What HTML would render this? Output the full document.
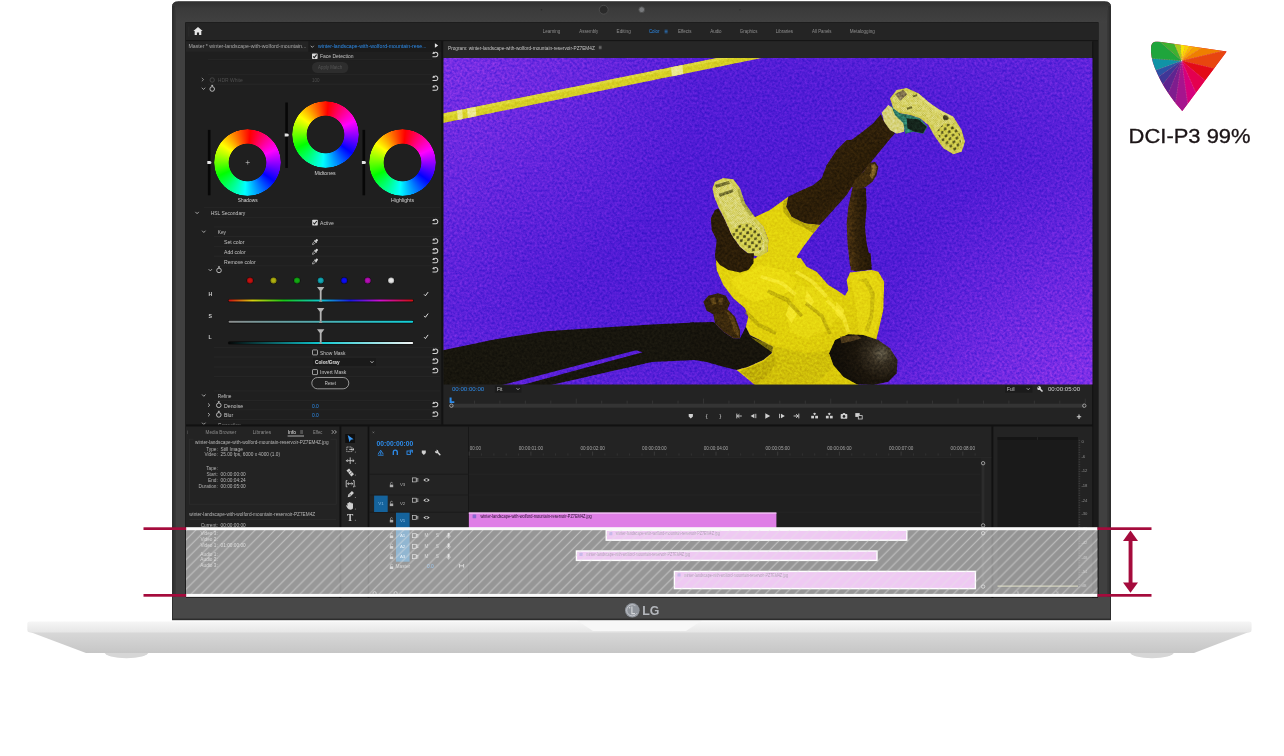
<!DOCTYPE html>
<html lang="en">
<head>
<meta charset="utf-8">
<title>DCI-P3 99% display</title>
<style>
html,body{margin:0;padding:0;background:#fff;}
#stage{position:relative;width:1284px;height:756px;overflow:hidden;background:#fff;font-family:"Liberation Sans",sans-serif;}
#stage svg{position:absolute;left:0;top:0;display:block;will-change:transform;}
svg text{font-family:"Liberation Sans",sans-serif;}
.wheel{position:absolute;width:67px;height:67px;border-radius:50%;
  background:conic-gradient(from 5deg,#ff0000 0deg,#ff0080 30deg,#ff00ff 60deg,#8000ff 90deg,#0000ff 120deg,#0080ff 150deg,#00ffff 180deg,#00ff80 210deg,#00ff00 240deg,#80ff00 270deg,#ffff00 300deg,#ff8000 330deg,#ff0000 360deg);
  -webkit-mask:radial-gradient(circle,transparent 18.5px,#000 19.2px,#000 32.9px,transparent 33.6px);
  mask:radial-gradient(circle,transparent 18.5px,#000 19.2px,#000 32.9px,transparent 33.6px);}
</style>
</head>
<body>
<div id="stage">
<svg width="1284" height="756" viewBox="0 0 1284 756">
<defs>
  <linearGradient id="gBezelL" x1="0" x2="1" y1="0" y2="0">
    <stop offset="0" stop-color="#2e2e2e"/><stop offset="0.18" stop-color="#3e3e3e"/><stop offset="1" stop-color="#434343"/>
  </linearGradient>
  <linearGradient id="gBezelT" x1="0" x2="0" y1="0" y2="1">
    <stop offset="0" stop-color="#303030"/><stop offset="0.3" stop-color="#3a3a3a"/><stop offset="1" stop-color="#414141"/>
  </linearGradient>
  <linearGradient id="gBaseTop" x1="0" x2="0" y1="0" y2="1">
    <stop offset="0" stop-color="#f6f6f6"/><stop offset="1" stop-color="#e6e6e6"/>
  </linearGradient>
  <linearGradient id="gBaseLow" x1="0" x2="0" y1="0" y2="1">
    <stop offset="0" stop-color="#d9d9d9"/><stop offset="1" stop-color="#c6c6c6"/>
  </linearGradient>
  <pattern id="hatch" width="9.9" height="9.9" patternUnits="userSpaceOnUse" x="187.9" y="528">
    <path d="M-2 11.9 L11.9 -2 M-2 2 L2 -2 M7.9 11.9 L11.9 7.9" stroke="#e4e4e4" stroke-opacity="0.55" stroke-width="1.1" fill="none"/>
  </pattern>
  <clipPath id="clipScreen"><rect x="186" y="23" width="912" height="575"/></clipPath>
  <clipPath id="clipPhoto"><rect x="443.5" y="58" width="649" height="326.4"/></clipPath>

  <radialGradient id="gPurpA" gradientUnits="userSpaceOnUse" cx="0" cy="0" r="1" gradientTransform="translate(770 215) scale(470 250)">
    <stop offset="0" stop-color="#4e1ad4" stop-opacity="1"/><stop offset="0.55" stop-color="#501bd5" stop-opacity="0.9"/><stop offset="1" stop-color="#521cd6" stop-opacity="0"/>
  </radialGradient>
  <radialGradient id="gPurpB" gradientUnits="userSpaceOnUse" cx="443" cy="58" r="260">
    <stop offset="0" stop-color="#7a30e6" stop-opacity="0.9"/><stop offset="1" stop-color="#7a30e6" stop-opacity="0"/>
  </radialGradient>
  <radialGradient id="gPurpC" gradientUnits="userSpaceOnUse" cx="1093" cy="385" r="230">
    <stop offset="0" stop-color="#8632ea" stop-opacity="0.8"/><stop offset="1" stop-color="#8632ea" stop-opacity="0"/>
  </radialGradient>
  <linearGradient id="gSkinA" x1="0" y1="0" x2="1" y2="1">
    <stop offset="0" stop-color="#3a280b"/><stop offset="0.55" stop-color="#2a1c07"/><stop offset="1" stop-color="#55390f"/>
  </linearGradient>
  <linearGradient id="gSkinB" x1="0" y1="0" x2="1" y2="0">
    <stop offset="0" stop-color="#4a3210"/><stop offset="0.45" stop-color="#2f2009"/><stop offset="1" stop-color="#241806"/>
  </linearGradient>
  <linearGradient id="gShirt" x1="0" y1="0" x2="1" y2="1">
    <stop offset="0" stop-color="#e3d30c"/><stop offset="0.5" stop-color="#e0cf0a"/><stop offset="1" stop-color="#d6c40a"/>
  </linearGradient>
  <radialGradient id="gHead" gradientUnits="userSpaceOnUse" cx="1150" cy="560" r="260">
    <stop offset="0" stop-color="#5e5746"/><stop offset="0.25" stop-color="#352d20"/><stop offset="0.6" stop-color="#1b150c"/><stop offset="1" stop-color="#120e08"/>
  </radialGradient>
  <filter id="fGrain" x="0" y="0" width="100%" height="100%" filterUnits="objectBoundingBox" color-interpolation-filters="sRGB">
    <feTurbulence type="fractalNoise" baseFrequency="0.4" numOctaves="2" seed="7" result="n"/>
    <feColorMatrix in="n" type="matrix" values="0.48 0 0 0 0.260  0.48 0 0 0 0.260  0.48 0 0 0 0.260  0 0 0 0 1"/>
  </filter>
  <pattern id="pSpike" width="30" height="30" patternUnits="userSpaceOnUse" patternTransform="rotate(38)">
    <path d="M15 3 L25 15 L15 27 L5 15 Z" fill="#3d3b12"/>
  </pattern>
  <pattern id="pMesh" width="9" height="9" patternUnits="userSpaceOnUse" patternTransform="rotate(38)">
    <rect x="0" y="0" width="4" height="4" fill="#8a8830" opacity="0.45"/>
  </pattern>

  <clipPath id="clipLum"><rect x="186" y="41" width="255" height="383.5"/></clipPath>
  <clipPath id="clipGamut"><path d="M150 97 L728 180 L355 680 C280 600 185 470 125 320 C100 255 88 195 93 140 C96 108 120 94 150 97 Z"/></clipPath>
  <linearGradient id="gHue" x1="0" x2="1" y1="0" y2="0">
    <stop offset="0" stop-color="#d01010"/><stop offset="0.13" stop-color="#d8d010"/><stop offset="0.3" stop-color="#18c818"/>
    <stop offset="0.5" stop-color="#10c8d0"/><stop offset="0.66" stop-color="#1818e0"/><stop offset="0.82" stop-color="#d010d0"/><stop offset="1" stop-color="#d01010"/>
  </linearGradient>
  <linearGradient id="gSat" x1="0" x2="1" y1="0" y2="0">
    <stop offset="0" stop-color="#8c8c8c"/><stop offset="1" stop-color="#10d0d8"/>
  </linearGradient>
  <linearGradient id="gLum" x1="0" x2="1" y1="0" y2="0">
    <stop offset="0" stop-color="#050505"/><stop offset="0.5" stop-color="#10c8d0"/><stop offset="1" stop-color="#f4f4f4"/>
  </linearGradient>
</defs>

<!-- ===== laptop base ===== -->
<g id="base">
  <ellipse cx="126.5" cy="652" rx="22" ry="6.2" fill="#d6d6d6"/>
  <ellipse cx="1152" cy="652" rx="22" ry="6.2" fill="#d6d6d6"/>
  <path d="M27.5 631 L86 653 L1194 653 L1251.5 631 Z" fill="url(#gBaseLow)"/>
  <path d="M30 621.6 H1249 Q1251.6 621.6 1251.6 624 V629.5 Q1251.6 632.4 1248.5 632.4 H30.5 Q27.3 632.4 27.3 629.5 V624 Q27.3 621.6 30 621.6 Z" fill="url(#gBaseTop)"/>
  <path d="M577 620.5 H702 L686 631 H593 Z" fill="#f7f7f7"/>
</g>

<!-- ===== lid / bezel ===== -->
<g id="lid">
  <path d="M172 7 Q172 1.5 178 1.5 H1105 Q1111 1.5 1111 7 V620 H172 Z" fill="#404040"/>
  <path d="M172 7 Q172 1.5 178 1.5 H1105 Q1111 1.5 1111 7 V23 H172 Z" fill="url(#gBezelT)"/>
  <rect x="172" y="6" width="2.6" height="614" fill="#2f2f2f"/>
  <rect x="174.6" y="10" width="1.4" height="610" fill="#383838"/>
  <rect x="1108.4" y="6" width="2.6" height="614" fill="#2e2e2e"/>
  <rect x="1107" y="10" width="1.4" height="610" fill="#383838"/>
  <rect x="185.2" y="22.2" width="913.4" height="576.4" fill="#161616"/>
  <rect x="173" y="597" width="937" height="22.5" fill="#484848"/>
  <rect x="172" y="618.6" width="939" height="1.6" fill="#2c2c2c"/>
  <path d="M178 1.5 H1105" stroke="#5a5a5a" stroke-width="1" fill="none"/>
  <!-- camera -->
  <circle cx="603.7" cy="9.7" r="4.4" fill="#2a2a2a" stroke="#555" stroke-width="0.7"/>
  <circle cx="641.7" cy="9.7" r="2.9" fill="#77797c" stroke="#4c4c4c" stroke-width="0.9"/>
  <circle cx="541.5" cy="9.7" r="0.7" fill="#2a2a2a"/>
  <circle cx="740" cy="9.7" r="0.7" fill="#2a2a2a"/>
  <!-- LG logo -->
  <circle cx="632.3" cy="610.3" r="7.3" fill="#8f949b"/>
  <circle cx="632.3" cy="610.3" r="5.6" fill="none" stroke="#c9ccd1" stroke-width="0.9" stroke-dasharray="26 9.2" stroke-dashoffset="-3"/>
  <path d="M631.9 606.4 V613.6 H635" stroke="#d5d7da" stroke-width="1.1" fill="none"/>
  <circle cx="629.6" cy="607.8" r="0.8" fill="#d5d7da"/>
  <text x="642.3" y="614.9" font-size="12.6" font-weight="700" fill="#b4b7bc" textLength="17.2" lengthAdjust="spacingAndGlyphs">LG</text>
</g>

<!-- ===== screen ===== -->
<g id="screen" clip-path="url(#clipScreen)">
  <rect x="186" y="23" width="912" height="575" fill="#1e1e1e"/>
<rect x="186.00" y="23.00" width="912.00" height="17.20" fill="#242424"/>
<rect x="186.00" y="40.20" width="912.00" height="1.10" fill="#131313"/>
<rect x="186.00" y="41.30" width="255.50" height="383.30" fill="#1f1f1f"/>
<rect x="186.00" y="41.30" width="122.50" height="10.40" fill="#242424"/>
<rect x="308.50" y="41.30" width="133.00" height="10.40" fill="#1b1b1b"/>
<rect x="441.30" y="41.30" width="2.20" height="383.30" fill="#121212"/>
<rect x="443.50" y="41.30" width="649.60" height="383.30" fill="#232323"/>
<rect x="443.50" y="41.30" width="649.60" height="16.70" fill="#262626"/>
<rect x="1093.10" y="41.30" width="5.00" height="557.00" fill="#1a1a1a"/>
<rect x="1092.20" y="41.30" width="1.00" height="557.00" fill="#111111"/>
<rect x="186.00" y="424.50" width="907.00" height="2.10" fill="#111111"/>
<rect x="186.00" y="426.60" width="153.50" height="172.00" fill="#232323"/>
<rect x="339.50" y="426.60" width="2.00" height="172.00" fill="#111111"/>
<rect x="341.50" y="426.60" width="26.20" height="172.00" fill="#232323"/>
<rect x="367.70" y="426.60" width="1.80" height="172.00" fill="#111111"/>
<rect x="369.50" y="426.60" width="622.00" height="172.00" fill="#232323"/>
<rect x="468.60" y="457.50" width="512.00" height="141.00" fill="#1f1f1f"/>
<rect x="468.00" y="426.60" width="0.80" height="172.00" fill="#151515"/>
<rect x="991.50" y="426.60" width="2.00" height="172.00" fill="#111111"/>
<rect x="993.50" y="426.60" width="98.80" height="172.00" fill="#232323"/>
<rect x="997.50" y="437.20" width="80.50" height="150.50" fill="#1a1a1a"/>
<rect x="997.50" y="437.20" width="80.50" height="2.60" fill="#151515"/>
<rect x="1037.20" y="437.20" width="0.80" height="2.60" fill="#2a2a2a"/>

  <!-- ===== program monitor photo ===== -->
  <g id="photo" clip-path="url(#clipPhoto)">
    <rect x="443" y="57.5" width="650" height="327.5" fill="#6225dd"/>
    <rect x="443" y="57.5" width="650" height="327.5" fill="url(#gPurpA)"/>
    <rect x="443" y="57.5" width="650" height="327.5" fill="url(#gPurpB)"/>
    <rect x="443" y="57.5" width="650" height="327.5" fill="url(#gPurpC)"/>
    <!-- crossbar -->
    <path d="M443 113.4 L719.5 57.5 L764 57.5 L443 123 Z" fill="#d6cf24"/>
    <path d="M443 113.4 L719.5 57.5 L733 57.5 L443 116.6 Z" fill="#e6e04a" opacity="0.55"/>
    <path d="M457 110.6 L462 109.6 L462.8 118.9 L457.8 119.9 Z M467 108.6 L475.5 106.9 L476.3 116.2 L467.8 117.9 Z" fill="#ece88c"/>
    <path d="M671 67.3 L682.5 65 L683.3 74 L671.8 76.4 Z" fill="#ece88c"/>
    <!-- ground shadow -->
    <path d="M443 350.3 L493 339.7 L546 331.3 L599 327.8 L652 324.6 L694 322.4 L694 360 L652 362 L551 385 L522 385 L642.6 352.2 L636 350.3 L502 385 L443 385 Z" fill="#17150d"/>
    <!-- tile A : legs, left shoe, shorts -->
    <g transform="translate(690,140) scale(0.166667)">
      <path d="M150 420 L125 470 L130 540 L160 600 L150 690 L160 756 L380 756 L370 700 L300 640 L250 570 L210 480 L170 410 Z" fill="#2b1d08"/>
      <path d="M590 340 L480 420 L385 465 L440 520 L470 600 L465 670 L400 700 L380 756 L690 756 L640 700 L680 640 L740 560 L780 508 L690 500 L610 460 L578 400 Z" fill="#e2d20c"/>
      <path d="M590 340 L578 400 L610 460 L690 500 L780 508 L740 560 L690 530 L610 490 L560 430 L560 370 Z" fill="#b9a808"/>
      <path d="M940 0 L880 60 L820 150 L790 230 L740 270 L650 310 L590 340 L578 400 L610 460 L690 500 L780 508 L860 420 L940 330 L975 275 L1060 165 L1130 80 L1195 0 Z" fill="url(#gSkinA)"/>
      <path d="M975 285 L1055 290 L1060 400 L1050 520 L1060 620 L1090 756 L960 756 L945 620 L940 500 L950 400 Z" fill="url(#gSkinB)"/>
      <path d="M1075 140 L1110 130 L1130 160 L1120 210 L1095 250 L1050 285 L1000 300 L970 280 L990 240 L1040 190 Z" fill="#3e2b0d"/>
      <path d="M1085 150 L1108 142 L1120 165 L1112 205 L1092 235 L1078 215 L1090 180 Z" fill="#8a6a28" opacity="0.8"/>
      <!-- left shoe sole -->
      <path d="M135 290 L150 250 L200 228 L260 235 L300 290 L330 380 L380 450 L440 520 L470 600 L465 670 L420 700 L360 690 L300 640 L250 570 L210 480 L170 400 L145 340 Z" fill="#d2cd52"/>
      <path d="M150 290 L162 262 L200 246 L250 252 L282 300 L312 390 L362 462 L420 530 L448 602 L444 660 L412 682 L366 672 L314 628 L266 560 L228 474 L188 394 L162 336 Z" fill="#e2dd7c" opacity="0.8"/>
      <path d="M150 290 L162 262 L200 246 L250 252 L282 300 L312 390 L362 462 L420 530 L448 602 L444 660 L412 682 L366 672 L314 628 L266 560 L228 474 L188 394 L162 336 Z" fill="url(#pMesh)"/>
      <path d="M246 545 L300 505 L362 500 L412 542 L440 610 L422 662 L372 672 L310 628 L262 588 Z" fill="#d6d150"/>
      <path d="M246 545 L300 505 L362 500 L412 542 L440 610 L422 662 L372 672 L310 628 L262 588 Z" fill="url(#pSpike)" opacity="0.85"/>
      <path d="M150 268 L232 246 L240 262 L158 288 Z M172 322 L256 296 L262 312 L180 340 Z" fill="#55531c" opacity="0.75"/>
      <path d="M300 290 L330 380 L380 450 L360 455 L312 385 L284 300 Z" fill="#8a8a3a" opacity="0.55"/>
    </g>
    <!-- tile C : raised lower leg + right shoe -->
    <g transform="translate(780,60) scale(0.166667)">
      <path d="M605 325 L560 380 L470 450 L400 500 L340 560 L290 640 L260 700 L300 720 L420 500 L560 500 L655 480 L690 440 L650 400 L620 360 Z" fill="#2e1f09"/>
      <path d="M610 315 L650 270 L680 290 L720 320 L750 380 L745 430 L700 442 L660 420 L625 370 Z" fill="#d6d27a"/>
      <path d="M655 245 L680 290 L720 320 L780 330 L840 350 L885 400 L860 442 L800 430 L752 442 L740 380 L690 330 Z" fill="#2b7a66"/>
      <path d="M760 350 L830 355 L880 400 L858 440 L800 428 L765 410 Z" fill="#15251c"/>
      <path d="M660 230 L700 180 L760 168 L830 200 L900 260 L960 300 L1040 340 L1090 420 L1110 490 L1090 550 L1040 565 L980 530 L930 460 L890 390 L840 350 L780 330 L720 320 L680 290 Z" fill="#d0cb4e"/>
      <path d="M676 232 L708 194 L758 184 L822 214 L892 272 L952 312 L1028 352 L1074 426 L1092 488 L1076 536 L1042 548 L992 518 L946 452 L906 380 L852 338 L786 316 L728 306 L692 282 Z" fill="#e0db76" opacity="0.8"/>
      <path d="M676 232 L708 194 L758 184 L822 214 L892 272 L952 312 L1028 352 L1074 426 L1092 488 L1076 536 L1042 548 L992 518 L946 452 L906 380 L852 338 L786 316 L728 306 L692 282 Z" fill="url(#pMesh)"/>
      <path d="M936 432 L986 378 L1042 388 L1082 450 L1088 522 L1042 548 L990 512 Z" fill="#d4cf4e"/>
      <path d="M936 432 L986 378 L1042 388 L1082 450 L1088 522 L1042 548 L990 512 Z" fill="url(#pSpike)" opacity="0.85"/>
      <path d="M690 205 L738 178 L764 206 L722 244 Z" fill="#5f4d46" opacity="0.7"/>
      <path d="M760 286 L790 278 L794 290 L764 298 Z M796 214 L822 206 L826 216 L800 224 Z" fill="#4a4818" opacity="0.8"/>
      <circle cx="995" cy="345" r="17" fill="#2f2b10" opacity="0.85"/>
      <path d="M830 200 L900 260 L960 300 L1040 340 L1028 352 L952 312 L892 272 L822 214 Z" fill="#f0ec9a" opacity="0.5"/>
    </g>
    <!-- tile B : torso, arms, head -->
    <g transform="translate(690,260) scale(0.166667)">
      <path d="M0 375 L140 372 L150 380 L200 430 L260 470 L300 470 L335 400 L360 450 L420 480 L500 520 L490 560 L440 600 L350 640 L280 660 L200 640 L100 612 L0 596 Z" fill="#17140c"/>
      <path d="M155 -10 L160 60 L200 150 L260 230 L330 290 L350 340 L335 400 L360 450 L420 480 L500 520 L490 560 L440 600 L350 640 L280 660 L330 700 L390 750 L1010 750 L1120 470 L1160 300 L1165 130 L1130 70 L1090 60 L960 75 L940 120 L950 180 L930 215 L880 180 L830 150 L760 70 L700 40 L665 -10 Z" fill="url(#gShirt)"/>
      <path d="M420 30 L560 60 L640 130 L600 190 L480 230 L380 250 L300 200 L240 120 L300 90 Z" fill="#f2e416" opacity="0.55"/>
      <path d="M640 150 L760 170 L860 240 L900 330 L820 420 L700 470 L600 430 L580 340 L620 240 Z" fill="#f0e218" opacity="0.45"/>
      <path d="M960 90 L1100 75 L1150 150 L1145 320 L1100 460 L1010 440 L1000 300 L980 200 Z" fill="#eadb12" opacity="0.6"/>
      <path d="M360 460 L520 520 L700 560 L840 540 L860 640 L760 740 L400 745 L300 668 L440 610 L500 560 Z" fill="#c4b40a" opacity="0.55"/>
      <path d="M600 250 L640 330 L610 380 L575 330 Z M700 180 L745 250 L720 290 L690 240 Z M880 250 L925 300 L910 360 L870 320 Z" fill="#fff23a" opacity="0.55"/>
      <path d="M430 90 L560 130 L640 200 L625 215 L545 150 L420 108 Z M640 60 L740 120 L830 215 L812 228 L725 138 L630 78 Z M830 235 L930 330 L960 430 L940 436 L908 340 L815 250 Z" fill="#fbef3c" opacity="0.6"/>
      <path d="M470 175 L590 230 L680 330 L662 342 L575 250 L462 196 Z M700 250 L800 330 L850 440 L830 448 L784 345 L690 268 Z M340 300 L420 380 L520 430 L512 450 L405 400 L330 320 Z" fill="#a89606" opacity="0.55"/>
      <path d="M1000 120 L1060 110 L1110 200 L1100 340 L1070 430 L1048 424 L1078 330 L1084 210 L1046 134 Z" fill="#a89606" opacity="0.4"/>
      <path d="M300 668 L440 610 L500 560 L520 610 L470 690 L390 748 Z" fill="#a89606" opacity="0.4"/>
      <path d="M150 -40 L156 0 L180 30 L230 60 L300 75 L350 60 L380 20 L384 -40 Z" fill="#2b1d08"/>
      <path d="M958 -40 L965 62 L1000 68 L1090 57 L1084 -40 Z" fill="url(#gSkinB)"/>
      <path d="M80 250 L110 215 L170 200 L215 215 L240 260 L225 295 L190 320 L140 325 L100 305 Z" fill="#33230a"/>
      <path d="M140 325 L225 295 L270 340 L300 420 L300 470 L260 470 L200 430 L150 380 Z" fill="#3b290c"/>
      <path d="M215 300 L262 345 L290 420 L292 462 L270 440 L250 380 Z" fill="#6e5019" opacity="0.6"/>
      <path d="M120 232 L150 222 L158 262 L132 272 Z M168 226 L196 228 L196 268 L172 268 Z" fill="#7a5c20" opacity="0.5"/>
      <!-- head -->
      <path d="M835 560 L870 480 L950 445 L1040 450 L1130 480 L1200 530 L1245 600 L1240 680 L1190 730 L1100 750 L1000 745 L920 700 L860 630 Z" fill="url(#gHead)"/>
      <path d="M900 460 L1000 450 L1030 470 L960 490 L910 500 Z" fill="#5a4320" opacity="0.8"/>
    </g>
    <rect x="443" y="57.5" width="650" height="327.5" filter="url(#fGrain)" opacity="1" style="mix-blend-mode:overlay"/>
  </g>
<g transform="translate(198,31.3)" fill="#e6e6e6"><path d="M0 -4.2 L4.6 -0.2 L3.3 -0.2 L3.3 3.7 L1.1 3.7 L1.1 1.1 L-1.1 1.1 L-1.1 3.7 L-3.3 3.7 L-3.3 -0.2 L-4.6 -0.2 Z"/></g>
<rect x="188.60" y="26.50" width="0.60" height="10.00" fill="#333333"/>
<text x="551.4" y="33.37" font-size="5.2" fill="#8f8f8f" text-anchor="middle" textLength="17.5" lengthAdjust="spacingAndGlyphs">Learning</text>
<text x="588.8" y="33.37" font-size="5.2" fill="#8f8f8f" text-anchor="middle" textLength="19.0" lengthAdjust="spacingAndGlyphs">Assembly</text>
<text x="623.7" y="33.37" font-size="5.2" fill="#8f8f8f" text-anchor="middle" textLength="14.2" lengthAdjust="spacingAndGlyphs">Editing</text>
<text x="654.2" y="33.37" font-size="5.2" fill="#2d8ceb" text-anchor="middle" textLength="10.6" lengthAdjust="spacingAndGlyphs">Color</text>
<text x="684.7" y="33.37" font-size="5.2" fill="#8f8f8f" text-anchor="middle" textLength="13.6" lengthAdjust="spacingAndGlyphs">Effects</text>
<text x="715.9" y="33.37" font-size="5.2" fill="#8f8f8f" text-anchor="middle" textLength="11.4" lengthAdjust="spacingAndGlyphs">Audio</text>
<text x="748.6" y="33.37" font-size="5.2" fill="#8f8f8f" text-anchor="middle" textLength="17.5" lengthAdjust="spacingAndGlyphs">Graphics</text>
<text x="784.4" y="33.37" font-size="5.2" fill="#8f8f8f" text-anchor="middle" textLength="17.3" lengthAdjust="spacingAndGlyphs">Libraries</text>
<text x="821.8" y="33.37" font-size="5.2" fill="#8f8f8f" text-anchor="middle" textLength="19.5" lengthAdjust="spacingAndGlyphs">All Panels</text>
<text x="862.3" y="33.37" font-size="5.2" fill="#8f8f8f" text-anchor="middle" textLength="25.0" lengthAdjust="spacingAndGlyphs">Metalogging</text>
<path d="M664.6 30.2 h3 M664.6 31.5 h3 M664.6 32.8 h3" stroke="#2d8ceb" stroke-width="0.6"/>
<text x="188.4" y="48.34" font-size="5.4" fill="#a8a8a8" textLength="118.0" lengthAdjust="spacingAndGlyphs">Master * winter-landscape-with-wolford-mountain...</text>
<path d="M310.77 45.79 L312.30 47.41 L313.83 45.79" stroke="#b0b0b0" stroke-width="0.85" fill="none"/>
<text x="318.0" y="48.34" font-size="5.4" fill="#2d8ceb" textLength="108.5" lengthAdjust="spacingAndGlyphs">winter-landscape-with-wolford-mountain-rese...</text>
<path d="M434.9 43.2 L438.2 45.5 L434.9 47.8 Z" fill="#e6e6e6"/>
<path d="M208.00 59.60 L432.00 59.60" stroke="#2a2a2a" stroke-width="0.7" fill="none"/>
<path d="M208.00 74.30 L432.00 74.30" stroke="#2a2a2a" stroke-width="0.7" fill="none"/>
<path d="M208.00 84.20 L432.00 84.20" stroke="#2a2a2a" stroke-width="0.7" fill="none"/>
<rect x="312.00" y="53.40" width="5.6" height="5.6" rx="0.7" fill="#d8d8d8"/><path d="M313.10 56.30 L314.30 57.60 L316.60 54.60" stroke="#1c1c1c" stroke-width="1.05" fill="none"/>
<text x="320.0" y="58.24" font-size="5.4" fill="#c4c4c4" textLength="33.5" lengthAdjust="spacingAndGlyphs">Face Detection</text>
<g transform="translate(435.5,54.3)" stroke="#d4d4d4" fill="none" stroke-width="1.05"><path d="M-1.9 -0.9 A2.25 2.25 0 1 1 0.5 2.4 L-3 2.4"/><path d="M-3.3 -0.6 L-0.6 -0.2 L-2 -2.7 Z" fill="#d4d4d4" stroke="none"/></g>
<rect x="312" y="62" width="36.3" height="11" rx="5.5" fill="#2d2d2d"/>
<text x="330.1" y="69.33" font-size="4.8" fill="#565656" text-anchor="middle" textLength="24.0" lengthAdjust="spacingAndGlyphs">Apply Match</text>
<path d="M201.80 77.90 L203.60 79.60 L201.80 81.30" stroke="#9a9a9a" stroke-width="0.85" fill="none"/>
<circle cx="212.2" cy="80" r="2.2" fill="none" stroke="#4c4c4c" stroke-width="0.8"/>
<text x="217.8" y="82.24" font-size="5.4" fill="#4f4f4f" textLength="25.0" lengthAdjust="spacingAndGlyphs">HDR White</text>
<text x="312.0" y="82.10" font-size="5.0" fill="#4f4f4f" textLength="7.6" lengthAdjust="spacingAndGlyphs">100</text>
<g transform="translate(435.5,78.1)" stroke="#d4d4d4" fill="none" stroke-width="1.05"><path d="M-1.9 -0.9 A2.25 2.25 0 1 1 0.5 2.4 L-3 2.4"/><path d="M-3.3 -0.6 L-0.6 -0.2 L-2 -2.7 Z" fill="#d4d4d4" stroke="none"/></g>
<path d="M201.80 87.70 L203.50 89.50 L205.20 87.70" stroke="#b0b0b0" stroke-width="0.85" fill="none"/>
<g transform="translate(212.2,88.6)" stroke="#d0d0d0" fill="none" stroke-width="0.85"><circle cx="0" cy="0.4" r="2.3"/><path d="M0 -1.9 V-3.2 M-0.9 -3.2 H0.9"/></g>
<g transform="translate(435.5,87.9)" stroke="#d4d4d4" fill="none" stroke-width="1.05"><path d="M-1.9 -0.9 A2.25 2.25 0 1 1 0.5 2.4 L-3 2.4"/><path d="M-3.3 -0.6 L-0.6 -0.2 L-2 -2.7 Z" fill="#d4d4d4" stroke="none"/></g>
<rect x="207.90" y="129.90" width="2.60" height="65.40" fill="#070707"/>
<path d="M207.3 160.9 H209.8 A1.6 1.6 0 0 1 209.8 164.1 H207.3 Z" fill="#e2e2e2"/>
<rect x="285.30" y="102.50" width="2.60" height="65.50" fill="#070707"/>
<path d="M284.7 133.4 H287.2 A1.6 1.6 0 0 1 287.2 136.6 H284.7 Z" fill="#e2e2e2"/>
<rect x="362.50" y="129.90" width="2.60" height="65.40" fill="#070707"/>
<path d="M361.9 160.9 H364.4 A1.6 1.6 0 0 1 364.4 164.1 H361.9 Z" fill="#e2e2e2"/>
<path d="M245.6 162.5 H249.8 M247.7 160.4 V164.6" stroke="#c8c8c8" stroke-width="0.6"/>
<text x="247.7" y="202.14" font-size="5.4" fill="#d2d2d2" text-anchor="middle" textLength="19.8" lengthAdjust="spacingAndGlyphs">Shadows</text>
<text x="325.1" y="174.74" font-size="5.4" fill="#d2d2d2" text-anchor="middle" textLength="21.2" lengthAdjust="spacingAndGlyphs">Midtones</text>
<text x="402.6" y="202.14" font-size="5.4" fill="#d2d2d2" text-anchor="middle" textLength="23.0" lengthAdjust="spacingAndGlyphs">Highlights</text>
<path d="M204.00 207.30 L440.00 207.30" stroke="#2a2a2a" stroke-width="0.7" fill="none"/>
<path d="M214.00 217.30 L440.00 217.30" stroke="#2a2a2a" stroke-width="0.7" fill="none"/>
<path d="M214.00 226.90 L440.00 226.90" stroke="#2a2a2a" stroke-width="0.7" fill="none"/>
<path d="M214.00 236.50 L440.00 236.50" stroke="#2a2a2a" stroke-width="0.7" fill="none"/>
<path d="M214.00 246.40 L440.00 246.40" stroke="#2a2a2a" stroke-width="0.7" fill="none"/>
<path d="M214.00 256.20 L440.00 256.20" stroke="#2a2a2a" stroke-width="0.7" fill="none"/>
<path d="M214.00 265.80 L440.00 265.80" stroke="#2a2a2a" stroke-width="0.7" fill="none"/>
<path d="M195.40 211.90 L197.10 213.70 L198.80 211.90" stroke="#b8b8b8" stroke-width="0.85" fill="none"/>
<text x="210.7" y="215.14" font-size="5.4" fill="#c0c0c0" textLength="34.6" lengthAdjust="spacingAndGlyphs">HSL Secondary</text>
<rect x="312.20" y="219.80" width="5.6" height="5.6" rx="0.7" fill="#d8d8d8"/><path d="M313.30 222.70 L314.50 224.00 L316.80 221.00" stroke="#1c1c1c" stroke-width="1.05" fill="none"/>
<text x="320.0" y="224.74" font-size="5.4" fill="#c4c4c4" textLength="13.8" lengthAdjust="spacingAndGlyphs">Active</text>
<g transform="translate(435.5,221.4)" stroke="#d4d4d4" fill="none" stroke-width="1.05"><path d="M-1.9 -0.9 A2.25 2.25 0 1 1 0.5 2.4 L-3 2.4"/><path d="M-3.3 -0.6 L-0.6 -0.2 L-2 -2.7 Z" fill="#d4d4d4" stroke="none"/></g>
<path d="M202.10 230.70 L203.80 232.50 L205.50 230.70" stroke="#b8b8b8" stroke-width="0.85" fill="none"/>
<text x="217.8" y="234.34" font-size="5.4" fill="#c0c0c0" textLength="8.2" lengthAdjust="spacingAndGlyphs">Key</text>
<text x="224.0" y="244.14" font-size="5.4" fill="#c4c4c4" textLength="20.5" lengthAdjust="spacingAndGlyphs">Set color</text>
<g transform="translate(315.0,242.0) rotate(45)" fill="#d8d8d8"><rect x="-1.1" y="-3.6" width="2.2" height="2.6" rx="0.8"/><rect x="-1.7" y="-1.3" width="3.4" height="0.9"/><path d="M-0.8 -0.4 H0.8 V2.2 L0 3.6 L-0.8 2.2 Z" fill="none" stroke="#d8d8d8" stroke-width="0.6"/></g>
<g transform="translate(435.5,240.9)" stroke="#d4d4d4" fill="none" stroke-width="1.05"><path d="M-1.9 -0.9 A2.25 2.25 0 1 1 0.5 2.4 L-3 2.4"/><path d="M-3.3 -0.6 L-0.6 -0.2 L-2 -2.7 Z" fill="#d4d4d4" stroke="none"/></g>
<text x="224.0" y="253.94" font-size="5.4" fill="#c4c4c4" textLength="21.6" lengthAdjust="spacingAndGlyphs">Add color</text>
<g transform="translate(315.0,251.8) rotate(45)" fill="#d8d8d8"><rect x="-1.1" y="-3.6" width="2.2" height="2.6" rx="0.8"/><rect x="-1.7" y="-1.3" width="3.4" height="0.9"/><path d="M-0.8 -0.4 H0.8 V2.2 L0 3.6 L-0.8 2.2 Z" fill="none" stroke="#d8d8d8" stroke-width="0.6"/></g>
<g transform="translate(435.5,250.7)" stroke="#d4d4d4" fill="none" stroke-width="1.05"><path d="M-1.9 -0.9 A2.25 2.25 0 1 1 0.5 2.4 L-3 2.4"/><path d="M-3.3 -0.6 L-0.6 -0.2 L-2 -2.7 Z" fill="#d4d4d4" stroke="none"/></g>
<text x="224.0" y="263.64" font-size="5.4" fill="#c4c4c4" textLength="31.6" lengthAdjust="spacingAndGlyphs">Remove color</text>
<g transform="translate(315.0,261.5) rotate(45)" fill="#d8d8d8"><rect x="-1.1" y="-3.6" width="2.2" height="2.6" rx="0.8"/><rect x="-1.7" y="-1.3" width="3.4" height="0.9"/><path d="M-0.8 -0.4 H0.8 V2.2 L0 3.6 L-0.8 2.2 Z" fill="none" stroke="#d8d8d8" stroke-width="0.6"/></g>
<g transform="translate(435.5,260.4)" stroke="#d4d4d4" fill="none" stroke-width="1.05"><path d="M-1.9 -0.9 A2.25 2.25 0 1 1 0.5 2.4 L-3 2.4"/><path d="M-3.3 -0.6 L-0.6 -0.2 L-2 -2.7 Z" fill="#d4d4d4" stroke="none"/></g>
<path d="M208.60 269.10 L210.30 270.90 L212.00 269.10" stroke="#b8b8b8" stroke-width="0.85" fill="none"/>
<g transform="translate(219.0,270.0)" stroke="#d0d0d0" fill="none" stroke-width="0.85"><circle cx="0" cy="0.4" r="2.3"/><path d="M0 -1.9 V-3.2 M-0.9 -3.2 H0.9"/></g>
<g transform="translate(435.5,269.6)" stroke="#d4d4d4" fill="none" stroke-width="1.05"><path d="M-1.9 -0.9 A2.25 2.25 0 1 1 0.5 2.4 L-3 2.4"/><path d="M-3.3 -0.6 L-0.6 -0.2 L-2 -2.7 Z" fill="#d4d4d4" stroke="none"/></g>
<circle cx="250" cy="280.4" r="3.5" fill="#0e0e0e"/><circle cx="250" cy="280.4" r="3.0" fill="#c4100f"/><circle cx="250" cy="280.4" r="2.6" fill="none" stroke="#000" stroke-opacity="0.22" stroke-width="0.9"/>
<circle cx="273.5" cy="280.4" r="3.5" fill="#0e0e0e"/><circle cx="273.5" cy="280.4" r="3.0" fill="#adad10"/><circle cx="273.5" cy="280.4" r="2.6" fill="none" stroke="#000" stroke-opacity="0.22" stroke-width="0.9"/>
<circle cx="297" cy="280.4" r="3.5" fill="#0e0e0e"/><circle cx="297" cy="280.4" r="3.0" fill="#12a812"/><circle cx="297" cy="280.4" r="2.6" fill="none" stroke="#000" stroke-opacity="0.22" stroke-width="0.9"/>
<circle cx="320.7" cy="280.4" r="3.5" fill="#0e0e0e"/><circle cx="320.7" cy="280.4" r="3.0" fill="#12a7b4"/><circle cx="320.7" cy="280.4" r="2.6" fill="none" stroke="#000" stroke-opacity="0.22" stroke-width="0.9"/>
<circle cx="344.2" cy="280.4" r="3.5" fill="#0e0e0e"/><circle cx="344.2" cy="280.4" r="3.0" fill="#0b0bf2"/><circle cx="344.2" cy="280.4" r="2.6" fill="none" stroke="#000" stroke-opacity="0.22" stroke-width="0.9"/>
<circle cx="367.7" cy="280.4" r="3.5" fill="#0e0e0e"/><circle cx="367.7" cy="280.4" r="3.0" fill="#b30db3"/><circle cx="367.7" cy="280.4" r="2.6" fill="none" stroke="#000" stroke-opacity="0.22" stroke-width="0.9"/>
<circle cx="391.1" cy="280.4" r="3.5" fill="#0e0e0e"/><circle cx="391.1" cy="280.4" r="3.0" fill="#e6e6e6"/><circle cx="391.1" cy="280.4" r="2.6" fill="none" stroke="#000" stroke-opacity="0.22" stroke-width="0.9"/>
<text x="208.6" y="296.37" font-size="5.2" fill="#d0d0d0" font-weight="700">H</text>
<rect x="227.90" y="298.90" width="185.90" height="3.40" fill="#0c0c0c" rx="1.7"/>
<rect x="228.50" y="299.60" width="184.70" height="2.00" fill="url(#gHue)" rx="1"/>
<path d="M317 286.9 H324.4 L321.6 290.7 V300.0 H319.8 V290.7 Z" fill="#b4b4b4"/><path d="M318.9 301.8 L320.7 299.4 L322.5 301.8 Z" fill="#9a9a9a"/>
<path d="M424.10 294.40 L425.40 295.80 L428.10 292.10" stroke="#e0e0e0" stroke-width="1.0" fill="none"/>
<text x="208.6" y="317.87" font-size="5.2" fill="#d0d0d0" font-weight="700">S</text>
<rect x="227.90" y="320.00" width="185.90" height="3.40" fill="#0c0c0c" rx="1.7"/>
<rect x="228.50" y="320.70" width="184.70" height="2.00" fill="url(#gSat)" rx="1"/>
<path d="M317 308.0 H324.4 L321.6 311.8 V321.1 H319.8 V311.8 Z" fill="#b4b4b4"/><path d="M318.9 322.9 L320.7 320.5 L322.5 322.9 Z" fill="#9a9a9a"/>
<path d="M424.10 315.90 L425.40 317.30 L428.10 313.60" stroke="#e0e0e0" stroke-width="1.0" fill="none"/>
<text x="208.6" y="339.17" font-size="5.2" fill="#d0d0d0" font-weight="700">L</text>
<rect x="227.90" y="341.20" width="185.90" height="3.40" fill="#0c0c0c" rx="1.7"/>
<rect x="228.50" y="341.90" width="184.70" height="2.00" fill="url(#gLum)" rx="1"/>
<path d="M317 329.2 H324.4 L321.6 333.0 V342.3 H319.8 V333.0 Z" fill="#b4b4b4"/><path d="M318.9 344.1 L320.7 341.7 L322.5 344.1 Z" fill="#9a9a9a"/>
<path d="M424.10 337.20 L425.40 338.60 L428.10 334.90" stroke="#e0e0e0" stroke-width="1.0" fill="none"/>
<path d="M214.00 347.30 L440.00 347.30" stroke="#2a2a2a" stroke-width="0.7" fill="none"/>
<path d="M214.00 357.00 L440.00 357.00" stroke="#2a2a2a" stroke-width="0.7" fill="none"/>
<path d="M214.00 367.00 L440.00 367.00" stroke="#2a2a2a" stroke-width="0.7" fill="none"/>
<path d="M214.00 376.60 L440.00 376.60" stroke="#2a2a2a" stroke-width="0.7" fill="none"/>
<path d="M214.00 390.90 L440.00 390.90" stroke="#2a2a2a" stroke-width="0.7" fill="none"/>
<path d="M214.00 400.60 L440.00 400.60" stroke="#2a2a2a" stroke-width="0.7" fill="none"/>
<path d="M214.00 409.80 L440.00 409.80" stroke="#2a2a2a" stroke-width="0.7" fill="none"/>
<path d="M214.00 419.60 L440.00 419.60" stroke="#2a2a2a" stroke-width="0.7" fill="none"/>
<rect x="312.50" y="349.90" width="5" height="5" rx="0.6" fill="none" stroke="#c0c0c0" stroke-width="0.8"/>
<text x="320.0" y="354.54" font-size="5.4" fill="#c4c4c4" textLength="25.4" lengthAdjust="spacingAndGlyphs">Show Mask</text>
<g transform="translate(435.5,351.0)" stroke="#d4d4d4" fill="none" stroke-width="1.05"><path d="M-1.9 -0.9 A2.25 2.25 0 1 1 0.5 2.4 L-3 2.4"/><path d="M-3.3 -0.6 L-0.6 -0.2 L-2 -2.7 Z" fill="#d4d4d4" stroke="none"/></g>
<rect x="313.00" y="358.20" width="63.00" height="7.80" fill="#1a1a1a"/>
<text x="315.0" y="364.14" font-size="5.4" fill="#e0e0e0" textLength="24.6" lengthAdjust="spacingAndGlyphs" font-weight="700">Color/Gray</text>
<path d="M370.47 361.19 L372.00 362.81 L373.53 361.19" stroke="#c8c8c8" stroke-width="0.85" fill="none"/>
<g transform="translate(435.5,360.8)" stroke="#d4d4d4" fill="none" stroke-width="1.05"><path d="M-1.9 -0.9 A2.25 2.25 0 1 1 0.5 2.4 L-3 2.4"/><path d="M-3.3 -0.6 L-0.6 -0.2 L-2 -2.7 Z" fill="#d4d4d4" stroke="none"/></g>
<rect x="312.50" y="369.60" width="5" height="5" rx="0.6" fill="none" stroke="#c0c0c0" stroke-width="0.8"/>
<text x="320.0" y="374.24" font-size="5.4" fill="#c4c4c4" textLength="26.4" lengthAdjust="spacingAndGlyphs">Invert Mask</text>
<g transform="translate(435.5,370.4)" stroke="#d4d4d4" fill="none" stroke-width="1.05"><path d="M-1.9 -0.9 A2.25 2.25 0 1 1 0.5 2.4 L-3 2.4"/><path d="M-3.3 -0.6 L-0.6 -0.2 L-2 -2.7 Z" fill="#d4d4d4" stroke="none"/></g>
<rect x="311.8" y="377.5" width="37" height="11.3" rx="5.65" fill="none" stroke="#b4b4b4" stroke-width="0.8"/>
<text x="330.3" y="385.03" font-size="4.8" fill="#c8c8c8" text-anchor="middle" textLength="11.2" lengthAdjust="spacingAndGlyphs">Reset</text>
<path d="M202.10 394.50 L203.80 396.30 L205.50 394.50" stroke="#b8b8b8" stroke-width="0.85" fill="none"/>
<text x="217.8" y="398.14" font-size="5.4" fill="#c0c0c0" textLength="13.6" lengthAdjust="spacingAndGlyphs">Refine</text>
<path d="M208.00 403.40 L209.80 405.10 L208.00 406.80" stroke="#b8b8b8" stroke-width="0.85" fill="none"/>
<g transform="translate(218.8,404.9)" stroke="#d0d0d0" fill="none" stroke-width="0.85"><circle cx="0" cy="0.4" r="2.3"/><path d="M0 -1.9 V-3.2 M-0.9 -3.2 H0.9"/></g>
<text x="224.0" y="407.64" font-size="5.4" fill="#c4c4c4" textLength="19.2" lengthAdjust="spacingAndGlyphs">Denoise</text>
<text x="312.0" y="407.64" font-size="5.4" fill="#2d8ceb" textLength="6.8" lengthAdjust="spacingAndGlyphs">0.0</text>
<g transform="translate(435.5,404.3)" stroke="#d4d4d4" fill="none" stroke-width="1.05"><path d="M-1.9 -0.9 A2.25 2.25 0 1 1 0.5 2.4 L-3 2.4"/><path d="M-3.3 -0.6 L-0.6 -0.2 L-2 -2.7 Z" fill="#d4d4d4" stroke="none"/></g>
<path d="M208.00 413.00 L209.80 414.70 L208.00 416.40" stroke="#b8b8b8" stroke-width="0.85" fill="none"/>
<g transform="translate(218.8,414.5)" stroke="#d0d0d0" fill="none" stroke-width="0.85"><circle cx="0" cy="0.4" r="2.3"/><path d="M0 -1.9 V-3.2 M-0.9 -3.2 H0.9"/></g>
<text x="224.0" y="417.24" font-size="5.4" fill="#c4c4c4" textLength="9.2" lengthAdjust="spacingAndGlyphs">Blur</text>
<text x="312.0" y="417.24" font-size="5.4" fill="#2d8ceb" textLength="6.8" lengthAdjust="spacingAndGlyphs">0.0</text>
<g transform="translate(435.5,413.9)" stroke="#d4d4d4" fill="none" stroke-width="1.05"><path d="M-1.9 -0.9 A2.25 2.25 0 1 1 0.5 2.4 L-3 2.4"/><path d="M-3.3 -0.6 L-0.6 -0.2 L-2 -2.7 Z" fill="#d4d4d4" stroke="none"/></g>
<g clip-path="url(#clipLum)"><path d="M202.10 422.70 L203.80 424.50 L205.50 422.70" stroke="#b8b8b8" stroke-width="0.85" fill="none"/>
<text x="217.8" y="426.54" font-size="5.4" fill="#c0c0c0" textLength="23.0" lengthAdjust="spacingAndGlyphs">Correction</text>
</g>
<text x="448.0" y="49.51" font-size="5.3" fill="#c6c6c6" textLength="146.8" lengthAdjust="spacingAndGlyphs">Program: winter-landscape-with-wolford-mountain-reservoir-PZ7EM4Z</text>
<path d="M598.8 46.3 h2.8 M598.8 47.5 h2.8 M598.8 48.7 h2.8" stroke="#9a9a9a" stroke-width="0.55"/>
<text x="451.9" y="391.26" font-size="6.0" fill="#2d8ceb" textLength="32.4" lengthAdjust="spacingAndGlyphs">00:00:00:00</text>
<rect x="494.80" y="385.60" width="26.60" height="7.00" fill="#1b1b1b"/>
<text x="497.0" y="390.97" font-size="5.2" fill="#c8c8c8" textLength="5.4" lengthAdjust="spacingAndGlyphs">Fit</text>
<path d="M516.55 388.24 L518.00 389.76 L519.45 388.24" stroke="#b0b0b0" stroke-width="0.85" fill="none"/>
<rect x="1005.00" y="385.60" width="27.40" height="7.00" fill="#1b1b1b"/>
<text x="1007.0" y="390.97" font-size="5.2" fill="#c8c8c8" textLength="7.6" lengthAdjust="spacingAndGlyphs">Full</text>
<path d="M1026.76 388.24 L1028.20 389.76 L1029.64 388.24" stroke="#b0b0b0" stroke-width="0.85" fill="none"/>
<g transform="translate(1040,389) rotate(-45)" fill="#d6d6d6"><rect x="-0.75" y="-1" width="1.5" height="4.6" rx="0.6"/><path d="M-1.9 -3.4 A2 2 0 0 0 1.9 -3.4 L1.9 -2 A2 2 0 0 1 -1.9 -2 Z" transform="translate(0,1)"/><circle cx="0" cy="-1.6" r="1.7"/><rect x="-0.6" y="-3.8" width="1.2" height="1.9" fill="#232323"/></g>
<text x="1047.9" y="391.26" font-size="6.0" fill="#d0d0d0" textLength="32.2" lengthAdjust="spacingAndGlyphs">00:00:05:00</text>
<rect x="451.00" y="403.70" width="633.40" height="4.00" fill="#343434"/>
<path d="M474.45 400.60 L474.45 403.70" stroke="#3c3c3c" stroke-width="0.7" fill="none"/>
<path d="M499.90 400.60 L499.90 403.70" stroke="#3c3c3c" stroke-width="0.7" fill="none"/>
<path d="M525.35 400.60 L525.35 403.70" stroke="#3c3c3c" stroke-width="0.7" fill="none"/>
<path d="M550.80 400.60 L550.80 403.70" stroke="#3c3c3c" stroke-width="0.7" fill="none"/>
<path d="M576.25 398.60 L576.25 403.70" stroke="#3c3c3c" stroke-width="0.7" fill="none"/>
<path d="M601.70 400.60 L601.70 403.70" stroke="#3c3c3c" stroke-width="0.7" fill="none"/>
<path d="M627.15 400.60 L627.15 403.70" stroke="#3c3c3c" stroke-width="0.7" fill="none"/>
<path d="M652.60 400.60 L652.60 403.70" stroke="#3c3c3c" stroke-width="0.7" fill="none"/>
<path d="M678.05 400.60 L678.05 403.70" stroke="#3c3c3c" stroke-width="0.7" fill="none"/>
<path d="M703.50 398.60 L703.50 403.70" stroke="#3c3c3c" stroke-width="0.7" fill="none"/>
<path d="M728.95 400.60 L728.95 403.70" stroke="#3c3c3c" stroke-width="0.7" fill="none"/>
<path d="M754.40 400.60 L754.40 403.70" stroke="#3c3c3c" stroke-width="0.7" fill="none"/>
<path d="M779.85 400.60 L779.85 403.70" stroke="#3c3c3c" stroke-width="0.7" fill="none"/>
<path d="M805.30 400.60 L805.30 403.70" stroke="#3c3c3c" stroke-width="0.7" fill="none"/>
<path d="M830.75 398.60 L830.75 403.70" stroke="#3c3c3c" stroke-width="0.7" fill="none"/>
<path d="M856.20 400.60 L856.20 403.70" stroke="#3c3c3c" stroke-width="0.7" fill="none"/>
<path d="M881.65 400.60 L881.65 403.70" stroke="#3c3c3c" stroke-width="0.7" fill="none"/>
<path d="M907.10 400.60 L907.10 403.70" stroke="#3c3c3c" stroke-width="0.7" fill="none"/>
<path d="M932.55 400.60 L932.55 403.70" stroke="#3c3c3c" stroke-width="0.7" fill="none"/>
<path d="M958.00 398.60 L958.00 403.70" stroke="#3c3c3c" stroke-width="0.7" fill="none"/>
<path d="M983.45 400.60 L983.45 403.70" stroke="#3c3c3c" stroke-width="0.7" fill="none"/>
<path d="M1008.90 400.60 L1008.90 403.70" stroke="#3c3c3c" stroke-width="0.7" fill="none"/>
<path d="M1034.35 400.60 L1034.35 403.70" stroke="#3c3c3c" stroke-width="0.7" fill="none"/>
<path d="M1059.80 400.60 L1059.80 403.70" stroke="#3c3c3c" stroke-width="0.7" fill="none"/>
<path d="M1085.25 398.60 L1085.25 403.70" stroke="#3c3c3c" stroke-width="0.7" fill="none"/>
<path d="M449.6 397.4 H451.6 V401.2 H454.3 V403 H449.6 Z" fill="#2d8ceb"/>
<circle cx="451.4" cy="405.7" r="1.7" fill="none" stroke="#bdbdbd" stroke-width="0.75"/>
<circle cx="1084.3" cy="405.7" r="1.7" fill="none" stroke="#bdbdbd" stroke-width="0.75"/>
<path d="M688.7 414 H692.9 V416.6 L690.8 418.6 L688.7 416.6 Z" fill="#d0d0d0"/>
<text x="706.8" y="418.16" font-size="6" fill="#d0d0d0" text-anchor="middle">{</text>
<text x="720.2" y="418.16" font-size="6" fill="#d0d0d0" text-anchor="middle">}</text>
<path d="M736.8 413.6 V418.4 M737 416 H741.8 M739.4 414.2 L737.4 416 L739.4 417.8" stroke="#d0d0d0" stroke-width="0.9" fill="none"/>
<path d="M754.4 413.8 L750.6 416 L754.4 418.2 Z" fill="#d0d0d0"/><path d="M755.8 413.8 V418.2" stroke="#d0d0d0" stroke-width="0.9"/>
<path d="M765.3 413.2 L770.2 416 L765.3 418.8 Z" fill="#d0d0d0"/>
<path d="M781 413.8 L784.8 416 L781 418.2 Z" fill="#d0d0d0"/><path d="M779.6 413.8 V418.2" stroke="#d0d0d0" stroke-width="0.9"/>
<path d="M798.8 413.6 V418.4 M793.6 416 H798.4 M796 414.2 L798 416 L796 417.8" stroke="#d0d0d0" stroke-width="0.9" fill="none"/>
<g transform="translate(814.6,416)" fill="#d0d0d0"><rect x="-3.4" y="-0.2" width="2.8" height="2.6"/><rect x="0.6" y="-0.2" width="2.8" height="2.6"/><path d="M-1.6 -2.8 H1.6 L0 -0.6 Z"/><rect x="-0.5" y="-3.2" width="1" height="1.6"/></g>
<g transform="translate(829.3,416)" fill="#d0d0d0"><rect x="-3.4" y="-0.2" width="2.8" height="2.6"/><rect x="0.6" y="-0.2" width="2.8" height="2.6"/><path d="M-1.6 -2.8 H1.6 L0 -0.6 Z"/><rect x="-0.5" y="-3.2" width="1" height="1.6"/></g>
<g transform="translate(844,416)" fill="#d0d0d0"><rect x="-3.3" y="-1.9" width="6.6" height="4.6" rx="0.6"/><rect x="-1.2" y="-2.9" width="2.4" height="1.2"/><circle cx="0" cy="0.4" r="1.3" fill="#232323"/></g>
<g transform="translate(858.7,416)"><rect x="-3.4" y="-2.9" width="4.4" height="3.8" fill="#d0d0d0"/><rect x="-0.4" y="-0.4" width="3.9" height="3.4" fill="#232323" stroke="#d0d0d0" stroke-width="0.8"/></g>
<path d="M1076.8 416.7 H1081.2 M1079 414.5 V418.9" stroke="#d0d0d0" stroke-width="1.1"/>
<text x="220.9" y="433.87" font-size="5.2" fill="#8c8c8c" text-anchor="middle" textLength="30.6" lengthAdjust="spacingAndGlyphs">Media Browser</text>
<text x="261.9" y="433.87" font-size="5.2" fill="#8c8c8c" text-anchor="middle" textLength="18.4" lengthAdjust="spacingAndGlyphs">Libraries</text>
<text x="292.0" y="433.87" font-size="5.2" fill="#e4e4e4" text-anchor="middle" textLength="8.2" lengthAdjust="spacingAndGlyphs">Info</text>
<rect x="287.60" y="435.60" width="16.40" height="0.80" fill="#d0d0d0"/>
<path d="M300.2 430.8 h2.8 M300.2 432 h2.8 M300.2 433.2 h2.8" stroke="#9a9a9a" stroke-width="0.55"/>
<text x="313.0" y="433.87" font-size="5.2" fill="#8c8c8c" textLength="9.4" lengthAdjust="spacingAndGlyphs">Effec</text>
<path d="M331.8 430.2 L333.6 432 L331.8 433.8 M334.6 430.2 L336.4 432 L334.6 433.8" stroke="#c8c8c8" stroke-width="0.8" fill="none"/>
<rect x="187.20" y="430.50" width="0.60" height="3.50" fill="#555"/>
<rect x="189.4" y="439.2" width="146.8" height="65" fill="none" stroke="#2e2e2e" stroke-width="0.7"/>
<rect x="193.50" y="438.20" width="137.00" height="2.20" fill="#232323"/>
<text x="195.0" y="443.97" font-size="5.2" fill="#b8b8b8" textLength="133.6" lengthAdjust="spacingAndGlyphs">winter-landscape-with-wolford-mountain-reservoir-PZ7EM4Z.jpg</text>
<text x="217.8" y="450.51" font-size="4.75" fill="#b0b0b0" text-anchor="end">Type:</text>
<text x="220.6" y="450.51" font-size="4.75" fill="#b8b8b8">Still Image</text>
<text x="217.8" y="456.41" font-size="4.75" fill="#b0b0b0" text-anchor="end">Video:</text>
<text x="220.6" y="456.41" font-size="4.75" fill="#b8b8b8">25.00 fps, 6000 x 4000 (1.0)</text>
<text x="217.8" y="470.21" font-size="4.75" fill="#b0b0b0" text-anchor="end">Tape:</text>
<text x="217.8" y="476.01" font-size="4.75" fill="#b0b0b0" text-anchor="end">Start:</text>
<text x="220.6" y="476.01" font-size="4.75" fill="#b8b8b8">00:00:00:00</text>
<text x="217.8" y="481.91" font-size="4.75" fill="#b0b0b0" text-anchor="end">End:</text>
<text x="220.6" y="481.91" font-size="4.75" fill="#b8b8b8">00:00:04:24</text>
<text x="217.8" y="487.81" font-size="4.75" fill="#b0b0b0" text-anchor="end">Duration:</text>
<text x="220.6" y="487.81" font-size="4.75" fill="#b8b8b8">00:00:05:00</text>
<text x="189.2" y="515.77" font-size="5.2" fill="#b8b8b8" textLength="126.0" lengthAdjust="spacingAndGlyphs">winter-landscape-with-wolford-mountain-reservoir-PZ7EM4Z</text>
<path d="M189.40 519.60 L336.20 519.60" stroke="#2e2e2e" stroke-width="0.7" fill="none"/>
<text x="217.8" y="526.91" font-size="4.75" fill="#b0b0b0" text-anchor="end">Current:</text>
<text x="220.6" y="526.91" font-size="4.75" fill="#b8b8b8">00:00:00:00</text>
<text x="217.8" y="535.21" font-size="4.75" fill="#b0b0b0" text-anchor="end">Video 3:</text>
<text x="217.8" y="541.11" font-size="4.75" fill="#b0b0b0" text-anchor="end">Video 2:</text>
<text x="217.8" y="546.91" font-size="4.75" fill="#b0b0b0" text-anchor="end">Video 1:</text>
<text x="220.6" y="546.91" font-size="4.75" fill="#b8b8b8">01:00:00:00</text>
<text x="217.8" y="555.51" font-size="4.75" fill="#b0b0b0" text-anchor="end">Audio 1:</text>
<text x="217.8" y="561.41" font-size="4.75" fill="#b0b0b0" text-anchor="end">Audio 2:</text>
<text x="217.8" y="567.31" font-size="4.75" fill="#b0b0b0" text-anchor="end">Audio 3:</text>
<rect x="345.20" y="434.00" width="9.80" height="8.90" fill="#0f0f0f"/>
<path d="M347.7 434.9 L353.6 439.3 L350.8 439.7 L349.5 442.2 Z" fill="#3b97f0"/>
<g stroke="#d0d0d0" fill="none" stroke-width="0.85"><rect x="346.8" y="447" width="4.6" height="4.6" stroke-dasharray="1 0.7"/><path d="M349.2 449.4 H354 M352.4 447.9 L354 449.4 L352.4 450.9"/><path d="M346.4 460.7 H354 M350.2 457.4 V464 M347.7 459.4 L346.4 460.7 L347.7 462 M352.7 459.4 L354 460.7 L352.7 462"/><g transform="translate(350.2,472.4) rotate(-40)"><rect x="-1.7" y="-3.8" width="3.4" height="7.6" fill="#d0d0d0" stroke="none"/><path d="M-1.7 -1.2 H1.7 M-1.7 1.2 H1.7" stroke="#232323" stroke-width="0.5"/></g><path d="M346.2 480.6 V486.8 M354.2 480.6 V486.8 M346.2 480.6 H347.4 M346.2 486.8 H347.4 M354.2 480.6 H353 M354.2 486.8 H353 M347.6 483.7 H352.8 M348.8 482.6 L347.6 483.7 L348.8 484.8 M351.6 482.6 L352.8 483.7 L351.6 484.8"/><g transform="translate(350.4,494.6) rotate(45)"><path d="M-1.4 -3.6 H1.4 V1.4 L0 3.8 L-1.4 1.4 Z" fill="#d0d0d0" stroke="none"/><circle cx="0" cy="0.4" r="0.6" fill="#232323" stroke="none"/></g><path d="M347.4 506.4 V503.2 a0.8 0.8 0 0 1 1.4 0 V502.4 a0.8 0.8 0 0 1 1.4 0 V502.8 a0.8 0.8 0 0 1 1.4 0 V503.6 a0.8 0.8 0 0 1 1.4 0 V507.2 Q353 509.8 350.4 509.8 Q348.4 509.8 347.4 508 L346 505.6 Q346.8 504.8 347.4 506.4 Z" fill="#d0d0d0" stroke="none"/></g>
<text x="350.2" y="520.9" font-size="9.4" font-weight="700" fill="#d0d0d0" text-anchor="middle" style="font-family:'Liberation Serif',serif">T</text>
<path d="M354.6 452.4 l1.2 0 l0 -1.2 z" fill="#9a9a9a"/>
<path d="M354.6 463.8 l1.2 0 l0 -1.2 z" fill="#9a9a9a"/>
<path d="M354.6 475.4 l1.2 0 l0 -1.2 z" fill="#9a9a9a"/>
<path d="M354.6 486.6 l1.2 0 l0 -1.2 z" fill="#9a9a9a"/>
<path d="M354.6 498.0 l1.2 0 l0 -1.2 z" fill="#9a9a9a"/>
<path d="M354.6 509.4 l1.2 0 l0 -1.2 z" fill="#9a9a9a"/>
<path d="M354.6 520.8 l1.2 0 l0 -1.2 z" fill="#9a9a9a"/>
<path d="M372.6 431.6 l1.6 1.6 M374.2 431.6 l-1.6 1.6" stroke="#8a8a8a" stroke-width="0.5"/>
<text x="376.4" y="446.12" font-size="7.0" fill="#2d8ceb" textLength="36.8" lengthAdjust="spacingAndGlyphs" font-weight="700">00:00:00:00</text>
<g transform="translate(380.7,452.6)" stroke="#2d8ceb" fill="none" stroke-width="0.9"><path d="M-2.6 1.6 L0 -2.4 L2.6 1.6 M-2.8 2.6 H2.8 M0 -1 V2"/></g>
<g transform="translate(395.3,452.6)" stroke="#2d8ceb" fill="none" stroke-width="0.9"><path d="M-2 2.4 V-0.4 A2 2 0 0 1 2 -0.4 V2.4" stroke-width="1.3"/></g>
<g transform="translate(409.6,452.6)" stroke="#2d8ceb" fill="none" stroke-width="0.9"><rect x="-2.6" y="-1.6" width="3.4" height="3.4"/><path d="M0.2 -2.4 L2.8 -2.4 L2.8 0.2 M2.8 -2.4 L0 0.4"/></g>
<path d="M421.8 450.4 H425.8 V453 L423.8 455 L421.8 453 Z" fill="#d0d0d0"/>
<g transform="translate(437.8,452.6) rotate(-45)" fill="#d6d6d6"><rect x="-0.75" y="-1" width="1.5" height="4.6" rx="0.6"/><circle cx="0" cy="-1.6" r="1.7"/><rect x="-0.6" y="-3.8" width="1.2" height="1.9" fill="#232323"/></g>
<path d="M369.50 474.20 L468.00 474.20" stroke="#191919" stroke-width="0.8" fill="none"/>
<path d="M468.60 474.20 L980.40 474.20" stroke="#262626" stroke-width="0.7" fill="none"/>
<path d="M369.50 495.00 L468.00 495.00" stroke="#191919" stroke-width="0.8" fill="none"/>
<path d="M468.60 495.00 L980.40 495.00" stroke="#262626" stroke-width="0.7" fill="none"/>
<path d="M369.50 512.20 L468.00 512.20" stroke="#191919" stroke-width="0.8" fill="none"/>
<path d="M468.60 512.20 L980.40 512.20" stroke="#262626" stroke-width="0.7" fill="none"/>
<path d="M468.60 457.40 L991.50 457.40" stroke="#2c2c2c" stroke-width="0.6" fill="none"/>
<text x="469.7" y="449.76" font-size="4.9" fill="#a8a8a8" textLength="11.2" lengthAdjust="spacingAndGlyphs">00:00</text>
<path d="M469.20 451.60 L469.20 455.60" stroke="#4a4a4a" stroke-width="0.6" fill="none"/>
<path d="M481.54 453.40 L481.54 455.60" stroke="#3c3c3c" stroke-width="0.6" fill="none"/>
<path d="M493.88 453.40 L493.88 455.60" stroke="#3c3c3c" stroke-width="0.6" fill="none"/>
<path d="M506.22 453.40 L506.22 455.60" stroke="#3c3c3c" stroke-width="0.6" fill="none"/>
<path d="M518.56 453.40 L518.56 455.60" stroke="#3c3c3c" stroke-width="0.6" fill="none"/>
<text x="530.9" y="449.76" font-size="4.9" fill="#a8a8a8" text-anchor="middle" textLength="24.4" lengthAdjust="spacingAndGlyphs">00:00:01:00</text>
<path d="M530.90 451.60 L530.90 455.60" stroke="#4a4a4a" stroke-width="0.6" fill="none"/>
<path d="M543.24 453.40 L543.24 455.60" stroke="#3c3c3c" stroke-width="0.6" fill="none"/>
<path d="M555.58 453.40 L555.58 455.60" stroke="#3c3c3c" stroke-width="0.6" fill="none"/>
<path d="M567.92 453.40 L567.92 455.60" stroke="#3c3c3c" stroke-width="0.6" fill="none"/>
<path d="M580.26 453.40 L580.26 455.60" stroke="#3c3c3c" stroke-width="0.6" fill="none"/>
<text x="592.6" y="449.76" font-size="4.9" fill="#a8a8a8" text-anchor="middle" textLength="24.4" lengthAdjust="spacingAndGlyphs">00:00:02:00</text>
<path d="M592.60 451.60 L592.60 455.60" stroke="#4a4a4a" stroke-width="0.6" fill="none"/>
<path d="M604.94 453.40 L604.94 455.60" stroke="#3c3c3c" stroke-width="0.6" fill="none"/>
<path d="M617.28 453.40 L617.28 455.60" stroke="#3c3c3c" stroke-width="0.6" fill="none"/>
<path d="M629.62 453.40 L629.62 455.60" stroke="#3c3c3c" stroke-width="0.6" fill="none"/>
<path d="M641.96 453.40 L641.96 455.60" stroke="#3c3c3c" stroke-width="0.6" fill="none"/>
<text x="654.3" y="449.76" font-size="4.9" fill="#a8a8a8" text-anchor="middle" textLength="24.4" lengthAdjust="spacingAndGlyphs">00:00:03:00</text>
<path d="M654.30 451.60 L654.30 455.60" stroke="#4a4a4a" stroke-width="0.6" fill="none"/>
<path d="M666.64 453.40 L666.64 455.60" stroke="#3c3c3c" stroke-width="0.6" fill="none"/>
<path d="M678.98 453.40 L678.98 455.60" stroke="#3c3c3c" stroke-width="0.6" fill="none"/>
<path d="M691.32 453.40 L691.32 455.60" stroke="#3c3c3c" stroke-width="0.6" fill="none"/>
<path d="M703.66 453.40 L703.66 455.60" stroke="#3c3c3c" stroke-width="0.6" fill="none"/>
<text x="716.0" y="449.76" font-size="4.9" fill="#a8a8a8" text-anchor="middle" textLength="24.4" lengthAdjust="spacingAndGlyphs">00:00:04:00</text>
<path d="M716.00 451.60 L716.00 455.60" stroke="#4a4a4a" stroke-width="0.6" fill="none"/>
<path d="M728.34 453.40 L728.34 455.60" stroke="#3c3c3c" stroke-width="0.6" fill="none"/>
<path d="M740.68 453.40 L740.68 455.60" stroke="#3c3c3c" stroke-width="0.6" fill="none"/>
<path d="M753.02 453.40 L753.02 455.60" stroke="#3c3c3c" stroke-width="0.6" fill="none"/>
<path d="M765.36 453.40 L765.36 455.60" stroke="#3c3c3c" stroke-width="0.6" fill="none"/>
<text x="777.7" y="449.76" font-size="4.9" fill="#a8a8a8" text-anchor="middle" textLength="24.4" lengthAdjust="spacingAndGlyphs">00:00:05:00</text>
<path d="M777.70 451.60 L777.70 455.60" stroke="#4a4a4a" stroke-width="0.6" fill="none"/>
<path d="M790.04 453.40 L790.04 455.60" stroke="#3c3c3c" stroke-width="0.6" fill="none"/>
<path d="M802.38 453.40 L802.38 455.60" stroke="#3c3c3c" stroke-width="0.6" fill="none"/>
<path d="M814.72 453.40 L814.72 455.60" stroke="#3c3c3c" stroke-width="0.6" fill="none"/>
<path d="M827.06 453.40 L827.06 455.60" stroke="#3c3c3c" stroke-width="0.6" fill="none"/>
<text x="839.4" y="449.76" font-size="4.9" fill="#a8a8a8" text-anchor="middle" textLength="24.4" lengthAdjust="spacingAndGlyphs">00:00:06:00</text>
<path d="M839.40 451.60 L839.40 455.60" stroke="#4a4a4a" stroke-width="0.6" fill="none"/>
<path d="M851.74 453.40 L851.74 455.60" stroke="#3c3c3c" stroke-width="0.6" fill="none"/>
<path d="M864.08 453.40 L864.08 455.60" stroke="#3c3c3c" stroke-width="0.6" fill="none"/>
<path d="M876.42 453.40 L876.42 455.60" stroke="#3c3c3c" stroke-width="0.6" fill="none"/>
<path d="M888.76 453.40 L888.76 455.60" stroke="#3c3c3c" stroke-width="0.6" fill="none"/>
<text x="901.1" y="449.76" font-size="4.9" fill="#a8a8a8" text-anchor="middle" textLength="24.4" lengthAdjust="spacingAndGlyphs">00:00:07:00</text>
<path d="M901.10 451.60 L901.10 455.60" stroke="#4a4a4a" stroke-width="0.6" fill="none"/>
<path d="M913.44 453.40 L913.44 455.60" stroke="#3c3c3c" stroke-width="0.6" fill="none"/>
<path d="M925.78 453.40 L925.78 455.60" stroke="#3c3c3c" stroke-width="0.6" fill="none"/>
<path d="M938.12 453.40 L938.12 455.60" stroke="#3c3c3c" stroke-width="0.6" fill="none"/>
<path d="M950.46 453.40 L950.46 455.60" stroke="#3c3c3c" stroke-width="0.6" fill="none"/>
<text x="962.8" y="449.76" font-size="4.9" fill="#a8a8a8" text-anchor="middle" textLength="24.4" lengthAdjust="spacingAndGlyphs">00:00:08:00</text>
<path d="M962.80 451.60 L962.80 455.60" stroke="#4a4a4a" stroke-width="0.6" fill="none"/>
<path d="M975.14 453.40 L975.14 455.60" stroke="#3c3c3c" stroke-width="0.6" fill="none"/>
<rect x="374.10" y="495.60" width="13.60" height="16.40" fill="#15639c"/>
<rect x="396.00" y="512.70" width="13.60" height="49.00" fill="#15639c"/>
<text x="380.9" y="505.38" font-size="4.4" fill="#8cc0e8" text-anchor="middle">V1</text>
<g transform="translate(391.5,484.8)"><rect x="-1.7" y="-0.2" width="3.4" height="2.6" fill="#adadad"/><path d="M-1.0 -0.2 V-1.3 A1.0 1.0 0 0 1 1.0 -1.5" stroke="#adadad" stroke-width="0.65" fill="none"/></g>
<text x="402.6" y="486.38" font-size="4.4" fill="#b0b0b0" text-anchor="middle">V3</text>
<g transform="translate(415.2,479.9)" stroke="#c8c8c8" fill="none" stroke-width="0.7"><rect x="-2.6" y="-2" width="3.6" height="4"/><path d="M1 -1.2 H3.2 M1 0 H3.2 M1 1.2 H3.2"/></g>
<g transform="translate(426.5,479.9)"><path d="M-3.2 0 Q0 -3.4 3.2 0 Q0 3.4 -3.2 0 Z" fill="#d0d0d0"/><circle r="1.2" fill="#232323"/></g>
<g transform="translate(391.5,503.7)"><rect x="-1.7" y="-0.2" width="3.4" height="2.6" fill="#adadad"/><path d="M-1.0 -0.2 V-1.3 A1.0 1.0 0 0 1 1.0 -1.5" stroke="#adadad" stroke-width="0.65" fill="none"/></g>
<text x="402.6" y="505.28" font-size="4.4" fill="#b0b0b0" text-anchor="middle">V2</text>
<g transform="translate(415.2,500.2)" stroke="#c8c8c8" fill="none" stroke-width="0.7"><rect x="-2.6" y="-2" width="3.6" height="4"/><path d="M1 -1.2 H3.2 M1 0 H3.2 M1 1.2 H3.2"/></g>
<g transform="translate(426.5,500.2)"><path d="M-3.2 0 Q0 -3.4 3.2 0 Q0 3.4 -3.2 0 Z" fill="#d0d0d0"/><circle r="1.2" fill="#232323"/></g>
<g transform="translate(391.5,520.0)"><rect x="-1.7" y="-0.2" width="3.4" height="2.6" fill="#adadad"/><path d="M-1.0 -0.2 V-1.3 A1.0 1.0 0 0 1 1.0 -1.5" stroke="#adadad" stroke-width="0.65" fill="none"/></g>
<text x="402.6" y="521.58" font-size="4.4" fill="#9cc8ec" text-anchor="middle">V1</text>
<g transform="translate(415.2,517.6)" stroke="#c8c8c8" fill="none" stroke-width="0.7"><rect x="-2.6" y="-2" width="3.6" height="4"/><path d="M1 -1.2 H3.2 M1 0 H3.2 M1 1.2 H3.2"/></g>
<g transform="translate(426.5,517.6)"><path d="M-3.2 0 Q0 -3.4 3.2 0 Q0 3.4 -3.2 0 Z" fill="#d0d0d0"/><circle r="1.2" fill="#232323"/></g>
<g transform="translate(391.5,535.7)"><rect x="-1.7" y="-0.2" width="3.4" height="2.6" fill="#adadad"/><path d="M-1.0 -0.2 V-1.3 A1.0 1.0 0 0 1 1.0 -1.5" stroke="#adadad" stroke-width="0.65" fill="none"/></g>
<text x="402.6" y="537.28" font-size="4.4" fill="#cfe4f4" text-anchor="middle">A1</text>
<g transform="translate(415.2,535.7)" stroke="#c8c8c8" fill="none" stroke-width="0.7"><rect x="-2.6" y="-2" width="3.6" height="4"/><path d="M1 -1.2 H3.2 M1 0 H3.2 M1 1.2 H3.2"/></g>
<text x="426.5" y="537.36" font-size="4.6" fill="#b0b0b0" text-anchor="middle">M</text>
<text x="437.4" y="537.36" font-size="4.6" fill="#b0b0b0" text-anchor="middle">S</text>
<g transform="translate(448.6,535.7)"><rect x="-1" y="-3" width="2" height="4" rx="1" fill="#c8c8c8"/><path d="M-1.8 0 A1.8 1.8 0 0 0 1.8 0 M0 1.8 V3" stroke="#c8c8c8" stroke-width="0.6" fill="none"/></g>
<g transform="translate(391.5,546.3)"><rect x="-1.7" y="-0.2" width="3.4" height="2.6" fill="#adadad"/><path d="M-1.0 -0.2 V-1.3 A1.0 1.0 0 0 1 1.0 -1.5" stroke="#adadad" stroke-width="0.65" fill="none"/></g>
<text x="402.6" y="547.88" font-size="4.4" fill="#cfe4f4" text-anchor="middle">A2</text>
<g transform="translate(415.2,546.3)" stroke="#c8c8c8" fill="none" stroke-width="0.7"><rect x="-2.6" y="-2" width="3.6" height="4"/><path d="M1 -1.2 H3.2 M1 0 H3.2 M1 1.2 H3.2"/></g>
<text x="426.5" y="547.96" font-size="4.6" fill="#b0b0b0" text-anchor="middle">M</text>
<text x="437.4" y="547.96" font-size="4.6" fill="#b0b0b0" text-anchor="middle">S</text>
<g transform="translate(448.6,546.3)"><rect x="-1" y="-3" width="2" height="4" rx="1" fill="#c8c8c8"/><path d="M-1.8 0 A1.8 1.8 0 0 0 1.8 0 M0 1.8 V3" stroke="#c8c8c8" stroke-width="0.6" fill="none"/></g>
<g transform="translate(391.5,556.7)"><rect x="-1.7" y="-0.2" width="3.4" height="2.6" fill="#adadad"/><path d="M-1.0 -0.2 V-1.3 A1.0 1.0 0 0 1 1.0 -1.5" stroke="#adadad" stroke-width="0.65" fill="none"/></g>
<text x="402.6" y="558.28" font-size="4.4" fill="#cfe4f4" text-anchor="middle">A3</text>
<g transform="translate(415.2,556.7)" stroke="#c8c8c8" fill="none" stroke-width="0.7"><rect x="-2.6" y="-2" width="3.6" height="4"/><path d="M1 -1.2 H3.2 M1 0 H3.2 M1 1.2 H3.2"/></g>
<text x="426.5" y="558.36" font-size="4.6" fill="#b0b0b0" text-anchor="middle">M</text>
<text x="437.4" y="558.36" font-size="4.6" fill="#b0b0b0" text-anchor="middle">S</text>
<g transform="translate(448.6,556.7)"><rect x="-1" y="-3" width="2" height="4" rx="1" fill="#c8c8c8"/><path d="M-1.8 0 A1.8 1.8 0 0 0 1.8 0 M0 1.8 V3" stroke="#c8c8c8" stroke-width="0.6" fill="none"/></g>
<g transform="translate(391.5,566.6)"><rect x="-1.7" y="-0.2" width="3.4" height="2.6" fill="#adadad"/><path d="M-1.0 -0.2 V-1.3 A1.0 1.0 0 0 1 1.0 -1.5" stroke="#adadad" stroke-width="0.65" fill="none"/></g>
<text x="395.6" y="568.33" font-size="4.8" fill="#b0b0b0" textLength="14.6" lengthAdjust="spacingAndGlyphs">Master</text>
<text x="427.0" y="568.33" font-size="4.8" fill="#2d8ceb">0.0</text>
<path d="M459.6 564 V567.6 M463.6 564 V567.6 M460.2 565.8 H463 " stroke="#d0d0d0" stroke-width="0.8"/>
<circle cx="374.6" cy="593.2" r="1.6" fill="none" stroke="#bdbdbd" stroke-width="0.75"/>
<circle cx="395.6" cy="593.2" r="1.6" fill="none" stroke="#bdbdbd" stroke-width="0.75"/>
<rect x="468.80" y="512.80" width="307.60" height="16.00" fill="#df7fe6"/>
<rect x="468.80" y="512.40" width="307.60" height="1.30" fill="#f4c8f6"/>
<rect x="472.60" y="514.60" width="3.60" height="3.60" fill="#8a6ad0" rx="0.5"/>
<text x="480.4" y="518.36" font-size="4.9" fill="#2a1030" textLength="111.4" lengthAdjust="spacingAndGlyphs">winter-landscape-with-wolford-mountain-reservoir-PZ7EM4Z.jpg</text>
<rect x="606.20" y="530.20" width="300.60" height="10.00" fill="#dc8ce6" stroke="#ffffff" stroke-width="1.4"/>
<rect x="609.20" y="532.00" width="3.20" height="3.20" fill="#8a6ad0" rx="0.5"/>
<text x="615.8" y="535.46" font-size="4.6" fill="#50305a" textLength="104.0" lengthAdjust="spacingAndGlyphs">winter-landscape-with-wolford-mountain-reservoir-PZ7EM4Z.jpg</text>
<rect x="576.40" y="551.00" width="300.60" height="9.40" fill="#dc8ce6" stroke="#ffffff" stroke-width="1.4"/>
<rect x="579.40" y="552.80" width="3.20" height="3.20" fill="#8a6ad0" rx="0.5"/>
<text x="586.0" y="556.26" font-size="4.6" fill="#50305a" textLength="104.0" lengthAdjust="spacingAndGlyphs">winter-landscape-with-wolford-mountain-reservoir-PZ7EM4Z.jpg</text>
<rect x="674.40" y="571.40" width="301.00" height="17.20" fill="#dc8ce6" stroke="#ffffff" stroke-width="1.4"/>
<rect x="677.40" y="573.20" width="3.20" height="3.20" fill="#8a6ad0" rx="0.5"/>
<text x="684.0" y="576.66" font-size="4.6" fill="#50305a" textLength="104.0" lengthAdjust="spacingAndGlyphs">winter-landscape-with-wolford-mountain-reservoir-PZ7EM4Z.jpg</text>
<rect x="981.80" y="463.00" width="2.60" height="62.60" fill="#2c2c2c"/>
<rect x="981.80" y="533.00" width="2.60" height="53.80" fill="#2c2c2c"/>
<circle cx="983.1" cy="463.2" r="1.7" fill="none" stroke="#bdbdbd" stroke-width="0.75"/>
<circle cx="983.1" cy="525.4" r="1.7" fill="none" stroke="#bdbdbd" stroke-width="0.75"/>
<circle cx="983.1" cy="533.2" r="1.7" fill="none" stroke="#bdbdbd" stroke-width="0.75"/>
<circle cx="983.1" cy="586.6" r="1.7" fill="none" stroke="#bdbdbd" stroke-width="0.75"/>
<text x="1081.4" y="443.21" font-size="4.2" fill="#8e8e8e">0</text>
<text x="1081.4" y="457.61" font-size="4.2" fill="#8e8e8e">-6</text>
<text x="1081.4" y="472.11" font-size="4.2" fill="#8e8e8e">-12</text>
<text x="1081.4" y="486.81" font-size="4.2" fill="#8e8e8e">-18</text>
<text x="1081.4" y="501.51" font-size="4.2" fill="#8e8e8e">-24</text>
<text x="1081.4" y="515.41" font-size="4.2" fill="#8e8e8e">-30</text>
<text x="1081.4" y="529.81" font-size="4.2" fill="#8e8e8e">-36</text>
<text x="1081.4" y="544.31" font-size="4.2" fill="#8e8e8e">-42</text>
<text x="1081.4" y="558.51" font-size="4.2" fill="#8e8e8e">-48</text>
<text x="1081.4" y="572.91" font-size="4.2" fill="#8e8e8e">-54</text>
<text x="1081.4" y="586.81" font-size="4.2" fill="#8e8e8e">dB</text>
<path d="M1078.60 440.40 L1080.20 440.40" stroke="#5a5a5a" stroke-width="0.5" fill="none"/>
<path d="M1078.60 442.80 L1080.20 442.80" stroke="#5a5a5a" stroke-width="0.5" fill="none"/>
<path d="M1078.60 445.20 L1080.20 445.20" stroke="#5a5a5a" stroke-width="0.5" fill="none"/>
<path d="M1078.60 447.60 L1080.20 447.60" stroke="#5a5a5a" stroke-width="0.5" fill="none"/>
<path d="M1078.60 450.00 L1080.20 450.00" stroke="#5a5a5a" stroke-width="0.5" fill="none"/>
<path d="M1078.60 452.40 L1080.20 452.40" stroke="#5a5a5a" stroke-width="0.5" fill="none"/>
<path d="M1078.60 454.80 L1080.20 454.80" stroke="#5a5a5a" stroke-width="0.5" fill="none"/>
<path d="M1078.60 457.20 L1080.20 457.20" stroke="#5a5a5a" stroke-width="0.5" fill="none"/>
<path d="M1078.60 459.60 L1080.20 459.60" stroke="#5a5a5a" stroke-width="0.5" fill="none"/>
<path d="M1078.60 462.00 L1080.20 462.00" stroke="#5a5a5a" stroke-width="0.5" fill="none"/>
<path d="M1078.60 464.40 L1080.20 464.40" stroke="#5a5a5a" stroke-width="0.5" fill="none"/>
<path d="M1078.60 466.80 L1080.20 466.80" stroke="#5a5a5a" stroke-width="0.5" fill="none"/>
<path d="M1078.60 469.20 L1080.20 469.20" stroke="#5a5a5a" stroke-width="0.5" fill="none"/>
<path d="M1078.60 471.60 L1080.20 471.60" stroke="#5a5a5a" stroke-width="0.5" fill="none"/>
<path d="M1078.60 474.00 L1080.20 474.00" stroke="#5a5a5a" stroke-width="0.5" fill="none"/>
<path d="M1078.60 476.40 L1080.20 476.40" stroke="#5a5a5a" stroke-width="0.5" fill="none"/>
<path d="M1078.60 478.80 L1080.20 478.80" stroke="#5a5a5a" stroke-width="0.5" fill="none"/>
<path d="M1078.60 481.20 L1080.20 481.20" stroke="#5a5a5a" stroke-width="0.5" fill="none"/>
<path d="M1078.60 483.60 L1080.20 483.60" stroke="#5a5a5a" stroke-width="0.5" fill="none"/>
<path d="M1078.60 486.00 L1080.20 486.00" stroke="#5a5a5a" stroke-width="0.5" fill="none"/>
<path d="M1078.60 488.40 L1080.20 488.40" stroke="#5a5a5a" stroke-width="0.5" fill="none"/>
<path d="M1078.60 490.80 L1080.20 490.80" stroke="#5a5a5a" stroke-width="0.5" fill="none"/>
<path d="M1078.60 493.20 L1080.20 493.20" stroke="#5a5a5a" stroke-width="0.5" fill="none"/>
<path d="M1078.60 495.60 L1080.20 495.60" stroke="#5a5a5a" stroke-width="0.5" fill="none"/>
<path d="M1078.60 498.00 L1080.20 498.00" stroke="#5a5a5a" stroke-width="0.5" fill="none"/>
<path d="M1078.60 500.40 L1080.20 500.40" stroke="#5a5a5a" stroke-width="0.5" fill="none"/>
<path d="M1078.60 502.80 L1080.20 502.80" stroke="#5a5a5a" stroke-width="0.5" fill="none"/>
<path d="M1078.60 505.20 L1080.20 505.20" stroke="#5a5a5a" stroke-width="0.5" fill="none"/>
<path d="M1078.60 507.60 L1080.20 507.60" stroke="#5a5a5a" stroke-width="0.5" fill="none"/>
<path d="M1078.60 510.00 L1080.20 510.00" stroke="#5a5a5a" stroke-width="0.5" fill="none"/>
<path d="M1078.60 512.40 L1080.20 512.40" stroke="#5a5a5a" stroke-width="0.5" fill="none"/>
<path d="M1078.60 514.80 L1080.20 514.80" stroke="#5a5a5a" stroke-width="0.5" fill="none"/>
<path d="M1078.60 517.20 L1080.20 517.20" stroke="#5a5a5a" stroke-width="0.5" fill="none"/>
<path d="M1078.60 519.60 L1080.20 519.60" stroke="#5a5a5a" stroke-width="0.5" fill="none"/>
<path d="M1078.60 522.00 L1080.20 522.00" stroke="#5a5a5a" stroke-width="0.5" fill="none"/>
<path d="M1078.60 524.40 L1080.20 524.40" stroke="#5a5a5a" stroke-width="0.5" fill="none"/>
<path d="M1078.60 526.80 L1080.20 526.80" stroke="#5a5a5a" stroke-width="0.5" fill="none"/>
<path d="M1078.60 529.20 L1080.20 529.20" stroke="#5a5a5a" stroke-width="0.5" fill="none"/>
<path d="M1078.60 531.60 L1080.20 531.60" stroke="#5a5a5a" stroke-width="0.5" fill="none"/>
<path d="M1078.60 534.00 L1080.20 534.00" stroke="#5a5a5a" stroke-width="0.5" fill="none"/>
<path d="M1078.60 536.40 L1080.20 536.40" stroke="#5a5a5a" stroke-width="0.5" fill="none"/>
<path d="M1078.60 538.80 L1080.20 538.80" stroke="#5a5a5a" stroke-width="0.5" fill="none"/>
<path d="M1078.60 541.20 L1080.20 541.20" stroke="#5a5a5a" stroke-width="0.5" fill="none"/>
<path d="M1078.60 543.60 L1080.20 543.60" stroke="#5a5a5a" stroke-width="0.5" fill="none"/>
<path d="M1078.60 546.00 L1080.20 546.00" stroke="#5a5a5a" stroke-width="0.5" fill="none"/>
<path d="M1078.60 548.40 L1080.20 548.40" stroke="#5a5a5a" stroke-width="0.5" fill="none"/>
<path d="M1078.60 550.80 L1080.20 550.80" stroke="#5a5a5a" stroke-width="0.5" fill="none"/>
<path d="M1078.60 553.20 L1080.20 553.20" stroke="#5a5a5a" stroke-width="0.5" fill="none"/>
<path d="M1078.60 555.60 L1080.20 555.60" stroke="#5a5a5a" stroke-width="0.5" fill="none"/>
<path d="M1078.60 558.00 L1080.20 558.00" stroke="#5a5a5a" stroke-width="0.5" fill="none"/>
<path d="M1078.60 560.40 L1080.20 560.40" stroke="#5a5a5a" stroke-width="0.5" fill="none"/>
<path d="M1078.60 562.80 L1080.20 562.80" stroke="#5a5a5a" stroke-width="0.5" fill="none"/>
<path d="M1078.60 565.20 L1080.20 565.20" stroke="#5a5a5a" stroke-width="0.5" fill="none"/>
<path d="M1078.60 567.60 L1080.20 567.60" stroke="#5a5a5a" stroke-width="0.5" fill="none"/>
<path d="M1078.60 570.00 L1080.20 570.00" stroke="#5a5a5a" stroke-width="0.5" fill="none"/>
<path d="M1078.60 572.40 L1080.20 572.40" stroke="#5a5a5a" stroke-width="0.5" fill="none"/>
<path d="M1078.60 574.80 L1080.20 574.80" stroke="#5a5a5a" stroke-width="0.5" fill="none"/>
<path d="M1078.60 577.20 L1080.20 577.20" stroke="#5a5a5a" stroke-width="0.5" fill="none"/>
<path d="M1078.60 579.60 L1080.20 579.60" stroke="#5a5a5a" stroke-width="0.5" fill="none"/>
<path d="M1078.60 582.00 L1080.20 582.00" stroke="#5a5a5a" stroke-width="0.5" fill="none"/>
<path d="M1078.60 584.40 L1080.20 584.40" stroke="#5a5a5a" stroke-width="0.5" fill="none"/>
<path d="M1078.60 586.80 L1080.20 586.80" stroke="#5a5a5a" stroke-width="0.5" fill="none"/>
<rect x="997.50" y="585.60" width="80.50" height="1.00" fill="#c8c88c"/>
<text x="1017.8" y="593.51" font-size="4.2" fill="#9a9a9a" text-anchor="middle">S</text>
<text x="1057.5" y="593.51" font-size="4.2" fill="#9a9a9a" text-anchor="middle">S</text>

</g>

<!-- ===== hatched overlay ===== -->
<g id="overlay">
  <rect x="186" y="528.7" width="911.5" height="66.7" fill="#ffffff" fill-opacity="0.535"/>
  <rect x="186" y="528.7" width="911.5" height="66.7" fill="url(#hatch)"/>
  <rect x="186" y="527.2" width="911.5" height="3" fill="#fbfbfb"/>
  <rect x="186" y="593.9" width="911.5" height="3" fill="#fbfbfb"/>
</g>

<!-- ===== dimension marks ===== -->
<g id="marks" fill="#a50b3c">
  <rect x="143.5" y="527.3" width="42.7" height="2.7"/>
  <rect x="143.5" y="594" width="42.7" height="2.7"/>
  <rect x="1097.5" y="527.3" width="54" height="2.7"/>
  <rect x="1097.5" y="594" width="54" height="2.7"/>
  <rect x="1128.6" y="538" width="3.9" height="47"/>
  <path d="M1130.5 530.6 L1138 541 H1123 Z"/>
  <path d="M1130.5 592.8 L1138 582.4 H1123 Z"/>
</g>

<!-- ===== DCI-P3 badge ===== -->
<g id="badge">
<g transform="translate(1140,30) scale(0.11905)" clip-path="url(#clipGamut)">
<rect x="60" y="60" width="720" height="660" fill="#e4004f"/>
<path d="M350 258 L283 -639 L420 -639 L555 -618 Z" fill="#f8e500" stroke="#f8e500" stroke-width="1.5"/>
<path d="M350 258 L555 -618 L666 -585 L771 -538 Z" fill="#fad100" stroke="#fad100" stroke-width="1.5"/>
<path d="M350 258 L771 -538 L854 -488 L932 -429 Z" fill="#f9b800" stroke="#f9b800" stroke-width="1.5"/>
<path d="M350 258 L932 -429 L1028 -333 L1110 -225 Z" fill="#f4a000" stroke="#f4a000" stroke-width="1.5"/>
<path d="M350 258 L1110 -225 L1180 -91 L1226 53 Z" fill="#ef7f00" stroke="#ef7f00" stroke-width="1.5"/>
<path d="M350 258 L1226 53 L1250 259 L1226 466 Z" fill="#e8460f" stroke="#e8460f" stroke-width="1.5"/>
<path d="M350 258 L1226 466 L1154 662 L1039 837 Z" fill="#e30b17" stroke="#e30b17" stroke-width="1.5"/>
<path d="M350 258 L1039 837 L890 978 L714 1081 Z" fill="#e4004f" stroke="#e4004f" stroke-width="1.5"/>
<path d="M350 258 L714 1081 L596 1124 L474 1149 Z" fill="#d6007d" stroke="#d6007d" stroke-width="1.5"/>
<path d="M350 258 L474 1149 L347 1158 L221 1149 Z" fill="#a6148e" stroke="#a6148e" stroke-width="1.5"/>
<path d="M350 258 L221 1149 L115 1127 L12 1092 Z" fill="#7f1d8e" stroke="#7f1d8e" stroke-width="1.5"/>
<path d="M350 258 L12 1092 L-104 1035 L-211 962 Z" fill="#5e2590" stroke="#5e2590" stroke-width="1.5"/>
<path d="M350 258 L-211 962 L-306 874 L-388 773 Z" fill="#3f3797" stroke="#3f3797" stroke-width="1.5"/>
<path d="M350 258 L-388 773 L-448 675 L-494 570 Z" fill="#2b52a5" stroke="#2b52a5" stroke-width="1.5"/>
<path d="M350 258 L-494 570 L-541 383 L-547 191 Z" fill="#1093a6" stroke="#1093a6" stroke-width="1.5"/>
<path d="M350 258 L-547 191 L-512 1 L-438 -178 L-326 -336 Z" fill="#1fa53c" stroke="#1fa53c" stroke-width="1.5"/>
<path d="M350 258 L-326 -336 L-179 -470 L-5 -569 Z" fill="#3db230" stroke="#3db230" stroke-width="1.5"/>
<path d="M350 258 L-5 -569 L136 -616 L283 -639 Z" fill="#a9cd1a" stroke="#a9cd1a" stroke-width="1.5"/>
<path d="M350 258 L310 -274" stroke="#ffffff" stroke-opacity="0.68" stroke-width="2.2" stroke-dasharray="9 5"/>
<path d="M350 258 L470 -254" stroke="#ffffff" stroke-opacity="0.68" stroke-width="2.2" stroke-dasharray="9 5"/>
<path d="M350 258 L610 -234" stroke="#ffffff" stroke-opacity="0.68" stroke-width="2.2" stroke-dasharray="9 5"/>
<path d="M350 258 L750 -214" stroke="#ffffff" stroke-opacity="0.68" stroke-width="2.2" stroke-dasharray="9 5"/>
<path d="M350 258 L1030 -174" stroke="#ffffff" stroke-opacity="0.68" stroke-width="2.2" stroke-dasharray="9 5"/>
<path d="M350 258 L1750 -70" stroke="#ffffff" stroke-opacity="0.68" stroke-width="2.2" stroke-dasharray="9 5"/>
<path d="M350 258 L1430 514" stroke="#ffffff" stroke-opacity="0.68" stroke-width="2.2" stroke-dasharray="9 5"/>
<path d="M350 258 L1130 914" stroke="#ffffff" stroke-opacity="0.68" stroke-width="2.2" stroke-dasharray="9 5"/>
<path d="M350 258 L822 1326" stroke="#ffffff" stroke-opacity="0.68" stroke-width="2.2" stroke-dasharray="9 5"/>
<path d="M350 258 L550 1698" stroke="#ffffff" stroke-opacity="0.68" stroke-width="2.2" stroke-dasharray="9 5"/>
<path d="M350 258 L150 1634" stroke="#ffffff" stroke-opacity="0.68" stroke-width="2.2" stroke-dasharray="9 5"/>
<path d="M350 258 L-58 1266" stroke="#ffffff" stroke-opacity="0.68" stroke-width="2.2" stroke-dasharray="9 5"/>
<path d="M350 258 L-230 986" stroke="#ffffff" stroke-opacity="0.68" stroke-width="2.2" stroke-dasharray="9 5"/>
<path d="M350 258 L-350 746" stroke="#ffffff" stroke-opacity="0.68" stroke-width="2.2" stroke-dasharray="9 5"/>
<path d="M350 258 L-450 554" stroke="#ffffff" stroke-opacity="0.68" stroke-width="2.2" stroke-dasharray="9 5"/>
<path d="M350 258 L-610 186" stroke="#ffffff" stroke-opacity="0.68" stroke-width="2.2" stroke-dasharray="9 5"/>
<path d="M350 258 L-370 -374" stroke="#ffffff" stroke-opacity="0.68" stroke-width="2.2" stroke-dasharray="9 5"/>
<path d="M350 258 L110 -302" stroke="#ffffff" stroke-opacity="0.68" stroke-width="2.2" stroke-dasharray="9 5"/>
</g>

  <text x="1128.6" y="142.9" font-size="20" fill="#1b1416" stroke="#1b1416" stroke-width="0.3" textLength="122" lengthAdjust="spacingAndGlyphs">DCI-P3 99%</text>
</g>
</svg>
<div class="wheel" style="left:214.2px;top:128.7px"></div>
<div class="wheel" style="left:291.6px;top:101.4px"></div>
<div class="wheel" style="left:369.1px;top:128.7px"></div>
</div>
</body>
</html>
